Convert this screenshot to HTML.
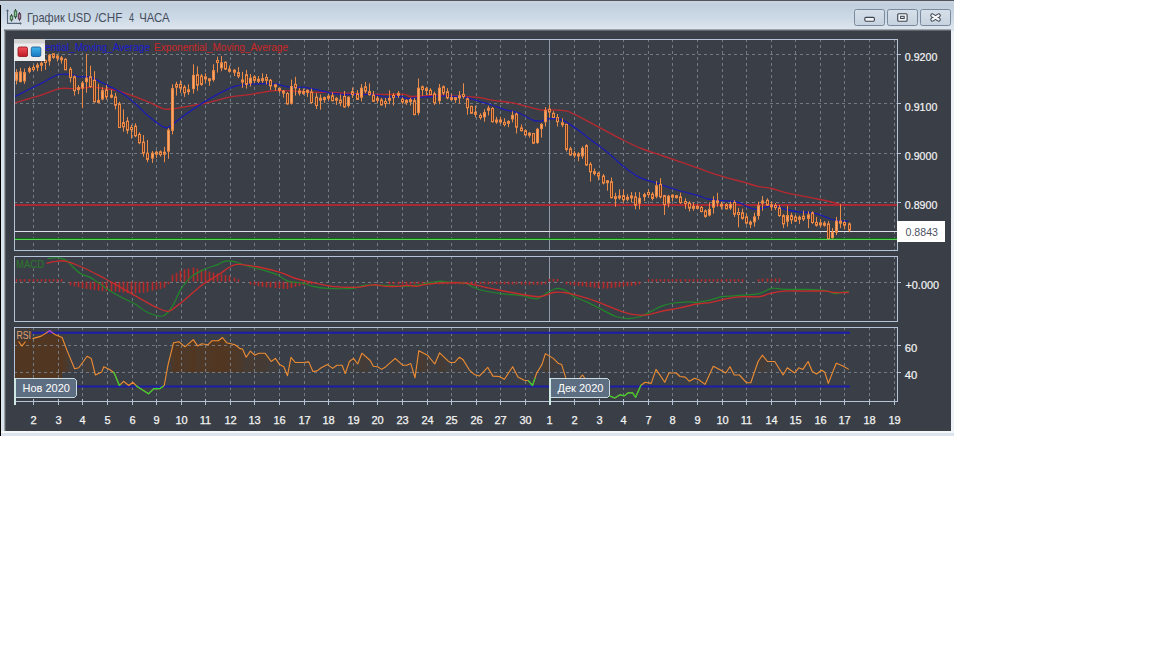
<!DOCTYPE html>
<html><head><meta charset="utf-8"><title>chart</title>
<style>html,body{margin:0;padding:0;background:#fff;width:1152px;height:648px;overflow:hidden}svg{display:block;font-family:"Liberation Sans",sans-serif}</style>
</head><body><svg width="1152" height="648" viewBox="0 0 1152 648">
<defs><linearGradient id="tb" x1="0" y1="0" x2="0" y2="1"><stop offset="0" stop-color="#cad4de"/><stop offset="0.12" stop-color="#c1cfdd"/><stop offset="0.55" stop-color="#cbd8e5"/><stop offset="1" stop-color="#dee6ee"/></linearGradient><linearGradient id="btn" x1="0" y1="0" x2="0" y2="1"><stop offset="0" stop-color="#d6e0ea"/><stop offset="1" stop-color="#c6d2df"/></linearGradient><linearGradient id="rsif" gradientUnits="userSpaceOnUse" x1="0" y1="336" x2="0" y2="376"><stop offset="0" stop-color="#5a3212" stop-opacity="0.9"/><stop offset="0.75" stop-color="#5a3212" stop-opacity="0.5"/><stop offset="1" stop-color="#5a3212" stop-opacity="0"/></linearGradient><clipPath id="cmain"><rect x="15" y="40" width="882" height="210"/></clipPath><clipPath id="cmacd"><rect x="15" y="257" width="882" height="64"/></clipPath><clipPath id="crsi"><rect x="15" y="328" width="882" height="73"/></clipPath></defs>
<rect x="0" y="0" width="954" height="436" fill="#dbe3ec"/>
<rect x="0" y="1" width="954" height="28.5" fill="url(#tb)"/>
<rect x="0" y="0" width="954" height="1" fill="#52575e"/>
<rect x="0" y="5" width="1" height="431" fill="#000"/>
<rect x="4" y="29.5" width="947" height="402" fill="#62676e"/>
<rect x="5" y="31" width="946" height="400" fill="#3a3f47"/>
<rect x="4" y="31" width="1" height="400" fill="#9ca1a6"/><rect x="5" y="31" width="1" height="400" fill="#5a5f65"/>
<rect x="1" y="431" width="953" height="2" fill="#f4f7fa"/>
<rect x="951" y="31" width="3" height="400" fill="#eef2f6"/>
<g fill="none" stroke="#566577" stroke-width="1.1"><path d="M7.5,10.5 V23.4 H20.5"/></g>
<path d="M7.5,9.2 L5.9,11.2 H9.1 Z M21.8,23.4 L19.9,21.8 V25 Z" fill="#566577"/>
<g stroke="#34443a" stroke-width="1"><line x1="11.5" y1="14" x2="11.5" y2="21.6"/><line x1="15.5" y1="9" x2="15.5" y2="18.8"/></g>
<line x1="19.5" y1="12" x2="19.5" y2="20.9" stroke="#443a46" stroke-width="1"/>
<rect x="10.3" y="15.9" width="2.4" height="4" fill="#9cc49c" stroke="#2e5a38" stroke-width="0.9"/>
<rect x="14.3" y="10.9" width="2.4" height="5.9" fill="#8cc08c" stroke="#2e5a38" stroke-width="0.9"/>
<rect x="18.3" y="13.8" width="2.4" height="5.2" fill="#b08098" stroke="#4a3048" stroke-width="0.9"/>
<text x="26.9" y="21.6" font-family="Liberation Sans" font-size="12.4" fill="#454d5c" textLength="64.3" lengthAdjust="spacingAndGlyphs">График USD</text>
<text x="95.1" y="21.6" font-family="Liberation Sans" font-size="12.4" fill="#454d5c" textLength="27.3" lengthAdjust="spacingAndGlyphs">/CHF</text>
<text x="129.1" y="21.6" font-family="Liberation Sans" font-size="12.4" fill="#454d5c" textLength="5.0" lengthAdjust="spacingAndGlyphs">4</text>
<text x="139.2" y="21.6" font-family="Liberation Sans" font-size="12.4" fill="#454d5c" textLength="30.5" lengthAdjust="spacingAndGlyphs">ЧАСА</text>
<rect x="854.5" y="9.5" width="30" height="16" rx="2" ry="2" fill="url(#btn)" stroke="#7a8a9c" stroke-width="1"/>
<rect x="887.5" y="9.5" width="30" height="16" rx="2" ry="2" fill="url(#btn)" stroke="#7a8a9c" stroke-width="1"/>
<rect x="920.5" y="9.5" width="30" height="16" rx="2" ry="2" fill="url(#btn)" stroke="#7a8a9c" stroke-width="1"/>
<rect x="864.8" y="17.4" width="9.6" height="3.9" rx="1.2" fill="#f0f3f6" stroke="#3c4450" stroke-width="1.1"/>
<rect x="897.7" y="13.7" width="9.4" height="7.6" rx="1" fill="#f0f3f6" stroke="#3c4450" stroke-width="1.1"/>
<rect x="900.6" y="16.3" width="3.6" height="2.2" fill="#dfe4ea" stroke="#3c4450" stroke-width="1"/>
<path d="M932.4,15.5 L938.7,19.5 M938.7,15.5 L932.4,19.5" stroke="#3c4450" stroke-width="4.2" stroke-linecap="round"/>
<path d="M932.4,15.5 L938.7,19.5 M938.7,15.5 L932.4,19.5" stroke="#f4f6f8" stroke-width="2.2" stroke-linecap="round"/>
<linearGradient id="rsih" gradientUnits="userSpaceOnUse" x1="32.5" y1="0" x2="848.8" y2="0"><stop offset="0.0000" stop-color="#5a3414" stop-opacity="0.72"/><stop offset="0.0037" stop-color="#5a3414" stop-opacity="0.72"/><stop offset="0.0074" stop-color="#5a3414" stop-opacity="0.72"/><stop offset="0.0110" stop-color="#5a3414" stop-opacity="0.72"/><stop offset="0.0147" stop-color="#5a3414" stop-opacity="0.72"/><stop offset="0.0184" stop-color="#5a3414" stop-opacity="0.72"/><stop offset="0.0221" stop-color="#5a3414" stop-opacity="0.72"/><stop offset="0.0257" stop-color="#5a3414" stop-opacity="0.72"/><stop offset="0.0294" stop-color="#5a3414" stop-opacity="0.72"/><stop offset="0.0331" stop-color="#5a3414" stop-opacity="0.72"/><stop offset="0.0368" stop-color="#5a3414" stop-opacity="0.72"/><stop offset="0.0404" stop-color="#5a3414" stop-opacity="0.59"/><stop offset="0.0441" stop-color="#5a3414" stop-opacity="0.36"/><stop offset="0.0478" stop-color="#5a3414" stop-opacity="0.14"/><stop offset="0.0515" stop-color="#5a3414" stop-opacity="0.00"/><stop offset="0.0551" stop-color="#5a3414" stop-opacity="0.00"/><stop offset="0.0588" stop-color="#5a3414" stop-opacity="0.02"/><stop offset="0.0625" stop-color="#5a3414" stop-opacity="0.14"/><stop offset="0.0662" stop-color="#5a3414" stop-opacity="0.27"/><stop offset="0.0698" stop-color="#5a3414" stop-opacity="0.26"/><stop offset="0.0735" stop-color="#5a3414" stop-opacity="0.08"/><stop offset="0.0772" stop-color="#5a3414" stop-opacity="0.00"/><stop offset="0.0809" stop-color="#5a3414" stop-opacity="0.00"/><stop offset="0.0845" stop-color="#5a3414" stop-opacity="0.00"/><stop offset="0.0882" stop-color="#5a3414" stop-opacity="0.00"/><stop offset="0.0919" stop-color="#5a3414" stop-opacity="0.00"/><stop offset="0.0956" stop-color="#5a3414" stop-opacity="0.00"/><stop offset="0.0992" stop-color="#5a3414" stop-opacity="0.00"/><stop offset="0.1029" stop-color="#5a3414" stop-opacity="0.00"/><stop offset="0.1066" stop-color="#5a3414" stop-opacity="0.00"/><stop offset="0.1103" stop-color="#5a3414" stop-opacity="0.00"/><stop offset="0.1139" stop-color="#5a3414" stop-opacity="0.00"/><stop offset="0.1176" stop-color="#5a3414" stop-opacity="0.00"/><stop offset="0.1213" stop-color="#5a3414" stop-opacity="0.00"/><stop offset="0.1250" stop-color="#5a3414" stop-opacity="0.00"/><stop offset="0.1286" stop-color="#5a3414" stop-opacity="0.00"/><stop offset="0.1323" stop-color="#5a3414" stop-opacity="0.00"/><stop offset="0.1360" stop-color="#5a3414" stop-opacity="0.00"/><stop offset="0.1397" stop-color="#5a3414" stop-opacity="0.00"/><stop offset="0.1433" stop-color="#5a3414" stop-opacity="0.00"/><stop offset="0.1470" stop-color="#5a3414" stop-opacity="0.00"/><stop offset="0.1507" stop-color="#5a3414" stop-opacity="0.00"/><stop offset="0.1544" stop-color="#5a3414" stop-opacity="0.00"/><stop offset="0.1580" stop-color="#5a3414" stop-opacity="0.00"/><stop offset="0.1617" stop-color="#5a3414" stop-opacity="0.00"/><stop offset="0.1654" stop-color="#5a3414" stop-opacity="0.00"/><stop offset="0.1691" stop-color="#5a3414" stop-opacity="0.33"/><stop offset="0.1727" stop-color="#5a3414" stop-opacity="0.69"/><stop offset="0.1764" stop-color="#5a3414" stop-opacity="0.72"/><stop offset="0.1801" stop-color="#5a3414" stop-opacity="0.71"/><stop offset="0.1838" stop-color="#5a3414" stop-opacity="0.64"/><stop offset="0.1874" stop-color="#5a3414" stop-opacity="0.59"/><stop offset="0.1911" stop-color="#5a3414" stop-opacity="0.66"/><stop offset="0.1948" stop-color="#5a3414" stop-opacity="0.72"/><stop offset="0.1985" stop-color="#5a3414" stop-opacity="0.72"/><stop offset="0.2021" stop-color="#5a3414" stop-opacity="0.60"/><stop offset="0.2058" stop-color="#5a3414" stop-opacity="0.65"/><stop offset="0.2095" stop-color="#5a3414" stop-opacity="0.66"/><stop offset="0.2132" stop-color="#5a3414" stop-opacity="0.64"/><stop offset="0.2168" stop-color="#5a3414" stop-opacity="0.68"/><stop offset="0.2205" stop-color="#5a3414" stop-opacity="0.72"/><stop offset="0.2242" stop-color="#5a3414" stop-opacity="0.72"/><stop offset="0.2279" stop-color="#5a3414" stop-opacity="0.72"/><stop offset="0.2315" stop-color="#5a3414" stop-opacity="0.72"/><stop offset="0.2352" stop-color="#5a3414" stop-opacity="0.72"/><stop offset="0.2389" stop-color="#5a3414" stop-opacity="0.69"/><stop offset="0.2426" stop-color="#5a3414" stop-opacity="0.67"/><stop offset="0.2462" stop-color="#5a3414" stop-opacity="0.65"/><stop offset="0.2499" stop-color="#5a3414" stop-opacity="0.60"/><stop offset="0.2536" stop-color="#5a3414" stop-opacity="0.53"/><stop offset="0.2573" stop-color="#5a3414" stop-opacity="0.51"/><stop offset="0.2609" stop-color="#5a3414" stop-opacity="0.31"/><stop offset="0.2646" stop-color="#5a3414" stop-opacity="0.36"/><stop offset="0.2683" stop-color="#5a3414" stop-opacity="0.42"/><stop offset="0.2720" stop-color="#5a3414" stop-opacity="0.33"/><stop offset="0.2757" stop-color="#5a3414" stop-opacity="0.37"/><stop offset="0.2793" stop-color="#5a3414" stop-opacity="0.38"/><stop offset="0.2830" stop-color="#5a3414" stop-opacity="0.38"/><stop offset="0.2867" stop-color="#5a3414" stop-opacity="0.32"/><stop offset="0.2904" stop-color="#5a3414" stop-opacity="0.20"/><stop offset="0.2940" stop-color="#5a3414" stop-opacity="0.16"/><stop offset="0.2977" stop-color="#5a3414" stop-opacity="0.22"/><stop offset="0.3014" stop-color="#5a3414" stop-opacity="0.09"/><stop offset="0.3051" stop-color="#5a3414" stop-opacity="0.01"/><stop offset="0.3087" stop-color="#5a3414" stop-opacity="0.00"/><stop offset="0.3124" stop-color="#5a3414" stop-opacity="0.00"/><stop offset="0.3161" stop-color="#5a3414" stop-opacity="0.18"/><stop offset="0.3198" stop-color="#5a3414" stop-opacity="0.17"/><stop offset="0.3234" stop-color="#5a3414" stop-opacity="0.10"/><stop offset="0.3271" stop-color="#5a3414" stop-opacity="0.10"/><stop offset="0.3308" stop-color="#5a3414" stop-opacity="0.10"/><stop offset="0.3345" stop-color="#5a3414" stop-opacity="0.11"/><stop offset="0.3381" stop-color="#5a3414" stop-opacity="0.12"/><stop offset="0.3418" stop-color="#5a3414" stop-opacity="0.00"/><stop offset="0.3455" stop-color="#5a3414" stop-opacity="0.00"/><stop offset="0.3492" stop-color="#5a3414" stop-opacity="0.00"/><stop offset="0.3528" stop-color="#5a3414" stop-opacity="0.00"/><stop offset="0.3565" stop-color="#5a3414" stop-opacity="0.00"/><stop offset="0.3602" stop-color="#5a3414" stop-opacity="0.03"/><stop offset="0.3639" stop-color="#5a3414" stop-opacity="0.00"/><stop offset="0.3675" stop-color="#5a3414" stop-opacity="0.00"/><stop offset="0.3712" stop-color="#5a3414" stop-opacity="0.00"/><stop offset="0.3749" stop-color="#5a3414" stop-opacity="0.02"/><stop offset="0.3786" stop-color="#5a3414" stop-opacity="0.02"/><stop offset="0.3822" stop-color="#5a3414" stop-opacity="0.00"/><stop offset="0.3859" stop-color="#5a3414" stop-opacity="0.00"/><stop offset="0.3896" stop-color="#5a3414" stop-opacity="0.16"/><stop offset="0.3933" stop-color="#5a3414" stop-opacity="0.23"/><stop offset="0.3969" stop-color="#5a3414" stop-opacity="0.11"/><stop offset="0.4006" stop-color="#5a3414" stop-opacity="0.20"/><stop offset="0.4043" stop-color="#5a3414" stop-opacity="0.37"/><stop offset="0.4080" stop-color="#5a3414" stop-opacity="0.29"/><stop offset="0.4116" stop-color="#5a3414" stop-opacity="0.21"/><stop offset="0.4153" stop-color="#5a3414" stop-opacity="0.09"/><stop offset="0.4190" stop-color="#5a3414" stop-opacity="0.00"/><stop offset="0.4227" stop-color="#5a3414" stop-opacity="0.00"/><stop offset="0.4263" stop-color="#5a3414" stop-opacity="0.00"/><stop offset="0.4300" stop-color="#5a3414" stop-opacity="0.00"/><stop offset="0.4337" stop-color="#5a3414" stop-opacity="0.00"/><stop offset="0.4374" stop-color="#5a3414" stop-opacity="0.08"/><stop offset="0.4410" stop-color="#5a3414" stop-opacity="0.16"/><stop offset="0.4447" stop-color="#5a3414" stop-opacity="0.22"/><stop offset="0.4484" stop-color="#5a3414" stop-opacity="0.14"/><stop offset="0.4521" stop-color="#5a3414" stop-opacity="0.05"/><stop offset="0.4557" stop-color="#5a3414" stop-opacity="0.02"/><stop offset="0.4594" stop-color="#5a3414" stop-opacity="0.03"/><stop offset="0.4631" stop-color="#5a3414" stop-opacity="0.07"/><stop offset="0.4668" stop-color="#5a3414" stop-opacity="0.00"/><stop offset="0.4704" stop-color="#5a3414" stop-opacity="0.00"/><stop offset="0.4741" stop-color="#5a3414" stop-opacity="0.45"/><stop offset="0.4778" stop-color="#5a3414" stop-opacity="0.40"/><stop offset="0.4815" stop-color="#5a3414" stop-opacity="0.35"/><stop offset="0.4851" stop-color="#5a3414" stop-opacity="0.29"/><stop offset="0.4888" stop-color="#5a3414" stop-opacity="0.18"/><stop offset="0.4925" stop-color="#5a3414" stop-opacity="0.07"/><stop offset="0.4962" stop-color="#5a3414" stop-opacity="0.25"/><stop offset="0.4998" stop-color="#5a3414" stop-opacity="0.37"/><stop offset="0.5035" stop-color="#5a3414" stop-opacity="0.29"/><stop offset="0.5072" stop-color="#5a3414" stop-opacity="0.20"/><stop offset="0.5109" stop-color="#5a3414" stop-opacity="0.12"/><stop offset="0.5145" stop-color="#5a3414" stop-opacity="0.10"/><stop offset="0.5182" stop-color="#5a3414" stop-opacity="0.13"/><stop offset="0.5219" stop-color="#5a3414" stop-opacity="0.24"/><stop offset="0.5256" stop-color="#5a3414" stop-opacity="0.22"/><stop offset="0.5292" stop-color="#5a3414" stop-opacity="0.12"/><stop offset="0.5329" stop-color="#5a3414" stop-opacity="0.00"/><stop offset="0.5366" stop-color="#5a3414" stop-opacity="0.00"/><stop offset="0.5403" stop-color="#5a3414" stop-opacity="0.00"/><stop offset="0.5440" stop-color="#5a3414" stop-opacity="0.00"/><stop offset="0.5476" stop-color="#5a3414" stop-opacity="0.00"/><stop offset="0.5513" stop-color="#5a3414" stop-opacity="0.00"/><stop offset="0.5550" stop-color="#5a3414" stop-opacity="0.00"/><stop offset="0.5587" stop-color="#5a3414" stop-opacity="0.00"/><stop offset="0.5623" stop-color="#5a3414" stop-opacity="0.00"/><stop offset="0.5660" stop-color="#5a3414" stop-opacity="0.00"/><stop offset="0.5697" stop-color="#5a3414" stop-opacity="0.00"/><stop offset="0.5734" stop-color="#5a3414" stop-opacity="0.00"/><stop offset="0.5770" stop-color="#5a3414" stop-opacity="0.00"/><stop offset="0.5807" stop-color="#5a3414" stop-opacity="0.00"/><stop offset="0.5844" stop-color="#5a3414" stop-opacity="0.00"/><stop offset="0.5881" stop-color="#5a3414" stop-opacity="0.00"/><stop offset="0.5917" stop-color="#5a3414" stop-opacity="0.00"/><stop offset="0.5954" stop-color="#5a3414" stop-opacity="0.00"/><stop offset="0.5991" stop-color="#5a3414" stop-opacity="0.00"/><stop offset="0.6028" stop-color="#5a3414" stop-opacity="0.00"/><stop offset="0.6064" stop-color="#5a3414" stop-opacity="0.00"/><stop offset="0.6101" stop-color="#5a3414" stop-opacity="0.00"/><stop offset="0.6138" stop-color="#5a3414" stop-opacity="0.00"/><stop offset="0.6175" stop-color="#5a3414" stop-opacity="0.00"/><stop offset="0.6211" stop-color="#5a3414" stop-opacity="0.00"/><stop offset="0.6248" stop-color="#5a3414" stop-opacity="0.10"/><stop offset="0.6285" stop-color="#5a3414" stop-opacity="0.37"/><stop offset="0.6322" stop-color="#5a3414" stop-opacity="0.32"/><stop offset="0.6358" stop-color="#5a3414" stop-opacity="0.26"/><stop offset="0.6395" stop-color="#5a3414" stop-opacity="0.19"/><stop offset="0.6432" stop-color="#5a3414" stop-opacity="0.10"/><stop offset="0.6469" stop-color="#5a3414" stop-opacity="0.05"/><stop offset="0.6505" stop-color="#5a3414" stop-opacity="0.00"/><stop offset="0.6542" stop-color="#5a3414" stop-opacity="0.00"/><stop offset="0.6579" stop-color="#5a3414" stop-opacity="0.00"/><stop offset="0.6616" stop-color="#5a3414" stop-opacity="0.00"/><stop offset="0.6652" stop-color="#5a3414" stop-opacity="0.00"/><stop offset="0.6689" stop-color="#5a3414" stop-opacity="0.00"/><stop offset="0.6726" stop-color="#5a3414" stop-opacity="0.00"/><stop offset="0.6763" stop-color="#5a3414" stop-opacity="0.00"/><stop offset="0.6799" stop-color="#5a3414" stop-opacity="0.00"/><stop offset="0.6836" stop-color="#5a3414" stop-opacity="0.00"/><stop offset="0.6873" stop-color="#5a3414" stop-opacity="0.00"/><stop offset="0.6910" stop-color="#5a3414" stop-opacity="0.00"/><stop offset="0.6946" stop-color="#5a3414" stop-opacity="0.00"/><stop offset="0.6983" stop-color="#5a3414" stop-opacity="0.00"/><stop offset="0.7020" stop-color="#5a3414" stop-opacity="0.00"/><stop offset="0.7057" stop-color="#5a3414" stop-opacity="0.00"/><stop offset="0.7093" stop-color="#5a3414" stop-opacity="0.00"/><stop offset="0.7130" stop-color="#5a3414" stop-opacity="0.00"/><stop offset="0.7167" stop-color="#5a3414" stop-opacity="0.00"/><stop offset="0.7204" stop-color="#5a3414" stop-opacity="0.00"/><stop offset="0.7240" stop-color="#5a3414" stop-opacity="0.00"/><stop offset="0.7277" stop-color="#5a3414" stop-opacity="0.00"/><stop offset="0.7314" stop-color="#5a3414" stop-opacity="0.00"/><stop offset="0.7351" stop-color="#5a3414" stop-opacity="0.00"/><stop offset="0.7387" stop-color="#5a3414" stop-opacity="0.00"/><stop offset="0.7424" stop-color="#5a3414" stop-opacity="0.00"/><stop offset="0.7461" stop-color="#5a3414" stop-opacity="0.00"/><stop offset="0.7498" stop-color="#5a3414" stop-opacity="0.00"/><stop offset="0.7534" stop-color="#5a3414" stop-opacity="0.00"/><stop offset="0.7571" stop-color="#5a3414" stop-opacity="0.00"/><stop offset="0.7608" stop-color="#5a3414" stop-opacity="0.00"/><stop offset="0.7645" stop-color="#5a3414" stop-opacity="0.00"/><stop offset="0.7681" stop-color="#5a3414" stop-opacity="0.00"/><stop offset="0.7718" stop-color="#5a3414" stop-opacity="0.00"/><stop offset="0.7755" stop-color="#5a3414" stop-opacity="0.00"/><stop offset="0.7792" stop-color="#5a3414" stop-opacity="0.00"/><stop offset="0.7828" stop-color="#5a3414" stop-opacity="0.00"/><stop offset="0.7865" stop-color="#5a3414" stop-opacity="0.00"/><stop offset="0.7902" stop-color="#5a3414" stop-opacity="0.00"/><stop offset="0.7939" stop-color="#5a3414" stop-opacity="0.00"/><stop offset="0.7975" stop-color="#5a3414" stop-opacity="0.00"/><stop offset="0.8012" stop-color="#5a3414" stop-opacity="0.00"/><stop offset="0.8049" stop-color="#5a3414" stop-opacity="0.00"/><stop offset="0.8086" stop-color="#5a3414" stop-opacity="0.00"/><stop offset="0.8123" stop-color="#5a3414" stop-opacity="0.00"/><stop offset="0.8159" stop-color="#5a3414" stop-opacity="0.00"/><stop offset="0.8196" stop-color="#5a3414" stop-opacity="0.00"/><stop offset="0.8233" stop-color="#5a3414" stop-opacity="0.00"/><stop offset="0.8270" stop-color="#5a3414" stop-opacity="0.00"/><stop offset="0.8306" stop-color="#5a3414" stop-opacity="0.00"/><stop offset="0.8343" stop-color="#5a3414" stop-opacity="0.00"/><stop offset="0.8380" stop-color="#5a3414" stop-opacity="0.00"/><stop offset="0.8417" stop-color="#5a3414" stop-opacity="0.00"/><stop offset="0.8453" stop-color="#5a3414" stop-opacity="0.00"/><stop offset="0.8490" stop-color="#5a3414" stop-opacity="0.00"/><stop offset="0.8527" stop-color="#5a3414" stop-opacity="0.00"/><stop offset="0.8564" stop-color="#5a3414" stop-opacity="0.00"/><stop offset="0.8600" stop-color="#5a3414" stop-opacity="0.00"/><stop offset="0.8637" stop-color="#5a3414" stop-opacity="0.00"/><stop offset="0.8674" stop-color="#5a3414" stop-opacity="0.00"/><stop offset="0.8711" stop-color="#5a3414" stop-opacity="0.00"/><stop offset="0.8747" stop-color="#5a3414" stop-opacity="0.00"/><stop offset="0.8784" stop-color="#5a3414" stop-opacity="0.00"/><stop offset="0.8821" stop-color="#5a3414" stop-opacity="0.00"/><stop offset="0.8858" stop-color="#5a3414" stop-opacity="0.00"/><stop offset="0.8894" stop-color="#5a3414" stop-opacity="0.15"/><stop offset="0.8931" stop-color="#5a3414" stop-opacity="0.29"/><stop offset="0.8968" stop-color="#5a3414" stop-opacity="0.24"/><stop offset="0.9005" stop-color="#5a3414" stop-opacity="0.14"/><stop offset="0.9041" stop-color="#5a3414" stop-opacity="0.14"/><stop offset="0.9078" stop-color="#5a3414" stop-opacity="0.14"/><stop offset="0.9115" stop-color="#5a3414" stop-opacity="0.05"/><stop offset="0.9152" stop-color="#5a3414" stop-opacity="0.00"/><stop offset="0.9188" stop-color="#5a3414" stop-opacity="0.00"/><stop offset="0.9225" stop-color="#5a3414" stop-opacity="0.00"/><stop offset="0.9262" stop-color="#5a3414" stop-opacity="0.00"/><stop offset="0.9299" stop-color="#5a3414" stop-opacity="0.00"/><stop offset="0.9335" stop-color="#5a3414" stop-opacity="0.00"/><stop offset="0.9372" stop-color="#5a3414" stop-opacity="0.00"/><stop offset="0.9409" stop-color="#5a3414" stop-opacity="0.00"/><stop offset="0.9446" stop-color="#5a3414" stop-opacity="0.00"/><stop offset="0.9482" stop-color="#5a3414" stop-opacity="0.06"/><stop offset="0.9519" stop-color="#5a3414" stop-opacity="0.04"/><stop offset="0.9556" stop-color="#5a3414" stop-opacity="0.00"/><stop offset="0.9593" stop-color="#5a3414" stop-opacity="0.00"/><stop offset="0.9629" stop-color="#5a3414" stop-opacity="0.00"/><stop offset="0.9666" stop-color="#5a3414" stop-opacity="0.00"/><stop offset="0.9703" stop-color="#5a3414" stop-opacity="0.00"/><stop offset="0.9740" stop-color="#5a3414" stop-opacity="0.00"/><stop offset="0.9776" stop-color="#5a3414" stop-opacity="0.00"/><stop offset="0.9813" stop-color="#5a3414" stop-opacity="0.00"/><stop offset="0.9850" stop-color="#5a3414" stop-opacity="0.08"/><stop offset="0.9887" stop-color="#5a3414" stop-opacity="0.05"/><stop offset="0.9923" stop-color="#5a3414" stop-opacity="0.01"/><stop offset="0.9960" stop-color="#5a3414" stop-opacity="0.00"/><stop offset="0.9997" stop-color="#5a3414" stop-opacity="0.00"/></linearGradient>
<clipPath id="crsi2"><rect x="15" y="328" width="882" height="44.5"/><rect x="15" y="328" width="47" height="50"/></clipPath>
<path d="M32.5,338.6 L41.2,336.1 L49.6,330.7 L54.8,334.4 L62.1,337.5 L67.3,351.1 L74.6,368.8 L78.8,367.8 L87.1,356.3 L91.2,358.4 L95.4,375.0 L101.7,371.9 L103.8,366.7 L110.0,369.8 L114.2,373.0 L119.4,385.5 L123.5,381.3 L128.8,385.5 L132.9,382.3 L137.1,386.5 L145.4,391.7 L148.5,393.8 L153.8,388.6 L160.0,388.6 L164.2,385.5 L168.3,363.6 L173.5,342.8 L178.8,341.7 L185.0,346.9 L193.3,339.6 L197.5,345.9 L201.7,343.8 L207.9,344.8 L212.1,340.7 L218.3,340.7 L222.5,337.5 L226.7,342.8 L235.0,344.8 L240.0,348.6 L242.5,349.0 L246.2,357.3 L250.4,351.1 L254.6,355.2 L258.8,353.2 L265.0,353.2 L271.2,361.5 L275.4,358.4 L279.6,364.6 L283.8,366.7 L287.5,375.7 L291.0,357.3 L295.2,362.5 L302.5,362.5 L308.8,361.9 L312.9,371.5 L317.1,370.9 L321.2,367.8 L327.5,364.6 L332.7,368.4 L336.9,365.2 L342.1,365.2 L345.2,373.6 L349.4,361.5 L353.5,358.4 L357.7,364.0 L361.9,353.2 L370.2,360.5 L373.3,366.3 L377.5,366.7 L381.7,369.4 L385.8,366.7 L395.2,358.4 L402.5,365.2 L406.7,365.2 L410.8,363.6 L415.0,377.8 L418.8,350.7 L427.5,355.2 L434.8,364.0 L439.6,352.8 L448.3,361.1 L450.4,362.5 L454.6,362.5 L459.2,357.3 L462.9,359.4 L469.2,369.8 L474.2,374.4 L479.4,376.1 L487.7,367.3 L492.9,376.1 L499.2,376.5 L504.4,379.2 L512.7,366.7 L517.9,377.1 L524.2,380.2 L528.3,380.7 L532.5,385.5 L536.7,373.0 L541.9,364.6 L545.4,353.6 L553.3,358.4 L558.5,363.6 L561.7,364.6 L565.8,378.2 L574.2,384.4 L582.5,375.0 L590.8,386.5 L603.3,390.7 L609.6,395.9 L614.8,398.0 L620.0,394.8 L624.2,395.9 L628.3,392.8 L632.5,392.8 L635.6,397.3 L640.8,385.5 L645.0,382.3 L651.2,383.4 L656.0,369.4 L664.8,382.3 L669.0,373.0 L676.2,373.0 L680.0,376.5 L685.2,377.1 L689.4,381.3 L694.6,378.2 L698.8,379.8 L705.0,384.4 L713.3,366.3 L719.6,369.4 L725.8,373.0 L730.0,366.7 L734.2,375.0 L739.4,375.0 L746.7,382.8 L750.8,382.8 L758.1,361.5 L762.3,355.2 L767.5,361.5 L774.8,361.5 L783.1,375.0 L787.3,367.8 L794.6,373.0 L798.8,367.8 L802.9,369.4 L808.1,361.5 L812.3,371.5 L816.5,374.0 L821.7,370.2 L824.8,372.3 L828.3,383.4 L836.2,363.2 L842.5,365.7 L848.8,369.4 L848.8,380.0 L32.5,380.0 Z" fill="url(#rsih)" clip-path="url(#crsi2)"/>
<rect x="15" y="339.5" width="17.5" height="38.5" fill="#5a3414" fill-opacity="0.72"/>
<line x1="33.5" y1="39.0" x2="33.5" y2="250.5" stroke="#737a82" stroke-width="1" stroke-dasharray="3,3"/>
<line x1="33.5" y1="256.0" x2="33.5" y2="321.5" stroke="#737a82" stroke-width="1" stroke-dasharray="3,3"/>
<line x1="33.5" y1="327.0" x2="33.5" y2="401.5" stroke="#737a82" stroke-width="1" stroke-dasharray="3,3"/>
<line x1="58.5" y1="39.0" x2="58.5" y2="250.5" stroke="#737a82" stroke-width="1" stroke-dasharray="3,3"/>
<line x1="58.5" y1="256.0" x2="58.5" y2="321.5" stroke="#737a82" stroke-width="1" stroke-dasharray="3,3"/>
<line x1="58.5" y1="327.0" x2="58.5" y2="401.5" stroke="#737a82" stroke-width="1" stroke-dasharray="3,3"/>
<line x1="82.5" y1="39.0" x2="82.5" y2="250.5" stroke="#737a82" stroke-width="1" stroke-dasharray="3,3"/>
<line x1="82.5" y1="256.0" x2="82.5" y2="321.5" stroke="#737a82" stroke-width="1" stroke-dasharray="3,3"/>
<line x1="82.5" y1="327.0" x2="82.5" y2="401.5" stroke="#737a82" stroke-width="1" stroke-dasharray="3,3"/>
<line x1="107.5" y1="39.0" x2="107.5" y2="250.5" stroke="#737a82" stroke-width="1" stroke-dasharray="3,3"/>
<line x1="107.5" y1="256.0" x2="107.5" y2="321.5" stroke="#737a82" stroke-width="1" stroke-dasharray="3,3"/>
<line x1="107.5" y1="327.0" x2="107.5" y2="401.5" stroke="#737a82" stroke-width="1" stroke-dasharray="3,3"/>
<line x1="132.5" y1="39.0" x2="132.5" y2="250.5" stroke="#737a82" stroke-width="1" stroke-dasharray="3,3"/>
<line x1="132.5" y1="256.0" x2="132.5" y2="321.5" stroke="#737a82" stroke-width="1" stroke-dasharray="3,3"/>
<line x1="132.5" y1="327.0" x2="132.5" y2="401.5" stroke="#737a82" stroke-width="1" stroke-dasharray="3,3"/>
<line x1="156.5" y1="39.0" x2="156.5" y2="250.5" stroke="#737a82" stroke-width="1" stroke-dasharray="3,3"/>
<line x1="156.5" y1="256.0" x2="156.5" y2="321.5" stroke="#737a82" stroke-width="1" stroke-dasharray="3,3"/>
<line x1="156.5" y1="327.0" x2="156.5" y2="401.5" stroke="#737a82" stroke-width="1" stroke-dasharray="3,3"/>
<line x1="181.5" y1="39.0" x2="181.5" y2="250.5" stroke="#737a82" stroke-width="1" stroke-dasharray="3,3"/>
<line x1="181.5" y1="256.0" x2="181.5" y2="321.5" stroke="#737a82" stroke-width="1" stroke-dasharray="3,3"/>
<line x1="181.5" y1="327.0" x2="181.5" y2="401.5" stroke="#737a82" stroke-width="1" stroke-dasharray="3,3"/>
<line x1="205.5" y1="39.0" x2="205.5" y2="250.5" stroke="#737a82" stroke-width="1" stroke-dasharray="3,3"/>
<line x1="205.5" y1="256.0" x2="205.5" y2="321.5" stroke="#737a82" stroke-width="1" stroke-dasharray="3,3"/>
<line x1="205.5" y1="327.0" x2="205.5" y2="401.5" stroke="#737a82" stroke-width="1" stroke-dasharray="3,3"/>
<line x1="230.5" y1="39.0" x2="230.5" y2="250.5" stroke="#737a82" stroke-width="1" stroke-dasharray="3,3"/>
<line x1="230.5" y1="256.0" x2="230.5" y2="321.5" stroke="#737a82" stroke-width="1" stroke-dasharray="3,3"/>
<line x1="230.5" y1="327.0" x2="230.5" y2="401.5" stroke="#737a82" stroke-width="1" stroke-dasharray="3,3"/>
<line x1="254.5" y1="39.0" x2="254.5" y2="250.5" stroke="#737a82" stroke-width="1" stroke-dasharray="3,3"/>
<line x1="254.5" y1="256.0" x2="254.5" y2="321.5" stroke="#737a82" stroke-width="1" stroke-dasharray="3,3"/>
<line x1="254.5" y1="327.0" x2="254.5" y2="401.5" stroke="#737a82" stroke-width="1" stroke-dasharray="3,3"/>
<line x1="279.5" y1="39.0" x2="279.5" y2="250.5" stroke="#737a82" stroke-width="1" stroke-dasharray="3,3"/>
<line x1="279.5" y1="256.0" x2="279.5" y2="321.5" stroke="#737a82" stroke-width="1" stroke-dasharray="3,3"/>
<line x1="279.5" y1="327.0" x2="279.5" y2="401.5" stroke="#737a82" stroke-width="1" stroke-dasharray="3,3"/>
<line x1="304.5" y1="39.0" x2="304.5" y2="250.5" stroke="#737a82" stroke-width="1" stroke-dasharray="3,3"/>
<line x1="304.5" y1="256.0" x2="304.5" y2="321.5" stroke="#737a82" stroke-width="1" stroke-dasharray="3,3"/>
<line x1="304.5" y1="327.0" x2="304.5" y2="401.5" stroke="#737a82" stroke-width="1" stroke-dasharray="3,3"/>
<line x1="328.5" y1="39.0" x2="328.5" y2="250.5" stroke="#737a82" stroke-width="1" stroke-dasharray="3,3"/>
<line x1="328.5" y1="256.0" x2="328.5" y2="321.5" stroke="#737a82" stroke-width="1" stroke-dasharray="3,3"/>
<line x1="328.5" y1="327.0" x2="328.5" y2="401.5" stroke="#737a82" stroke-width="1" stroke-dasharray="3,3"/>
<line x1="353.5" y1="39.0" x2="353.5" y2="250.5" stroke="#737a82" stroke-width="1" stroke-dasharray="3,3"/>
<line x1="353.5" y1="256.0" x2="353.5" y2="321.5" stroke="#737a82" stroke-width="1" stroke-dasharray="3,3"/>
<line x1="353.5" y1="327.0" x2="353.5" y2="401.5" stroke="#737a82" stroke-width="1" stroke-dasharray="3,3"/>
<line x1="377.5" y1="39.0" x2="377.5" y2="250.5" stroke="#737a82" stroke-width="1" stroke-dasharray="3,3"/>
<line x1="377.5" y1="256.0" x2="377.5" y2="321.5" stroke="#737a82" stroke-width="1" stroke-dasharray="3,3"/>
<line x1="377.5" y1="327.0" x2="377.5" y2="401.5" stroke="#737a82" stroke-width="1" stroke-dasharray="3,3"/>
<line x1="402.5" y1="39.0" x2="402.5" y2="250.5" stroke="#737a82" stroke-width="1" stroke-dasharray="3,3"/>
<line x1="402.5" y1="256.0" x2="402.5" y2="321.5" stroke="#737a82" stroke-width="1" stroke-dasharray="3,3"/>
<line x1="402.5" y1="327.0" x2="402.5" y2="401.5" stroke="#737a82" stroke-width="1" stroke-dasharray="3,3"/>
<line x1="427.5" y1="39.0" x2="427.5" y2="250.5" stroke="#737a82" stroke-width="1" stroke-dasharray="3,3"/>
<line x1="427.5" y1="256.0" x2="427.5" y2="321.5" stroke="#737a82" stroke-width="1" stroke-dasharray="3,3"/>
<line x1="427.5" y1="327.0" x2="427.5" y2="401.5" stroke="#737a82" stroke-width="1" stroke-dasharray="3,3"/>
<line x1="451.5" y1="39.0" x2="451.5" y2="250.5" stroke="#737a82" stroke-width="1" stroke-dasharray="3,3"/>
<line x1="451.5" y1="256.0" x2="451.5" y2="321.5" stroke="#737a82" stroke-width="1" stroke-dasharray="3,3"/>
<line x1="451.5" y1="327.0" x2="451.5" y2="401.5" stroke="#737a82" stroke-width="1" stroke-dasharray="3,3"/>
<line x1="476.5" y1="39.0" x2="476.5" y2="250.5" stroke="#737a82" stroke-width="1" stroke-dasharray="3,3"/>
<line x1="476.5" y1="256.0" x2="476.5" y2="321.5" stroke="#737a82" stroke-width="1" stroke-dasharray="3,3"/>
<line x1="476.5" y1="327.0" x2="476.5" y2="401.5" stroke="#737a82" stroke-width="1" stroke-dasharray="3,3"/>
<line x1="500.5" y1="39.0" x2="500.5" y2="250.5" stroke="#737a82" stroke-width="1" stroke-dasharray="3,3"/>
<line x1="500.5" y1="256.0" x2="500.5" y2="321.5" stroke="#737a82" stroke-width="1" stroke-dasharray="3,3"/>
<line x1="500.5" y1="327.0" x2="500.5" y2="401.5" stroke="#737a82" stroke-width="1" stroke-dasharray="3,3"/>
<line x1="525.5" y1="39.0" x2="525.5" y2="250.5" stroke="#737a82" stroke-width="1" stroke-dasharray="3,3"/>
<line x1="525.5" y1="256.0" x2="525.5" y2="321.5" stroke="#737a82" stroke-width="1" stroke-dasharray="3,3"/>
<line x1="525.5" y1="327.0" x2="525.5" y2="401.5" stroke="#737a82" stroke-width="1" stroke-dasharray="3,3"/>
<line x1="549.5" y1="39.0" x2="549.5" y2="250.5" stroke="#737a82" stroke-width="1" stroke-dasharray="3,3"/>
<line x1="549.5" y1="256.0" x2="549.5" y2="321.5" stroke="#737a82" stroke-width="1" stroke-dasharray="3,3"/>
<line x1="549.5" y1="327.0" x2="549.5" y2="401.5" stroke="#737a82" stroke-width="1" stroke-dasharray="3,3"/>
<line x1="574.5" y1="39.0" x2="574.5" y2="250.5" stroke="#737a82" stroke-width="1" stroke-dasharray="3,3"/>
<line x1="574.5" y1="256.0" x2="574.5" y2="321.5" stroke="#737a82" stroke-width="1" stroke-dasharray="3,3"/>
<line x1="574.5" y1="327.0" x2="574.5" y2="401.5" stroke="#737a82" stroke-width="1" stroke-dasharray="3,3"/>
<line x1="599.5" y1="39.0" x2="599.5" y2="250.5" stroke="#737a82" stroke-width="1" stroke-dasharray="3,3"/>
<line x1="599.5" y1="256.0" x2="599.5" y2="321.5" stroke="#737a82" stroke-width="1" stroke-dasharray="3,3"/>
<line x1="599.5" y1="327.0" x2="599.5" y2="401.5" stroke="#737a82" stroke-width="1" stroke-dasharray="3,3"/>
<line x1="623.5" y1="39.0" x2="623.5" y2="250.5" stroke="#737a82" stroke-width="1" stroke-dasharray="3,3"/>
<line x1="623.5" y1="256.0" x2="623.5" y2="321.5" stroke="#737a82" stroke-width="1" stroke-dasharray="3,3"/>
<line x1="623.5" y1="327.0" x2="623.5" y2="401.5" stroke="#737a82" stroke-width="1" stroke-dasharray="3,3"/>
<line x1="648.5" y1="39.0" x2="648.5" y2="250.5" stroke="#737a82" stroke-width="1" stroke-dasharray="3,3"/>
<line x1="648.5" y1="256.0" x2="648.5" y2="321.5" stroke="#737a82" stroke-width="1" stroke-dasharray="3,3"/>
<line x1="648.5" y1="327.0" x2="648.5" y2="401.5" stroke="#737a82" stroke-width="1" stroke-dasharray="3,3"/>
<line x1="672.5" y1="39.0" x2="672.5" y2="250.5" stroke="#737a82" stroke-width="1" stroke-dasharray="3,3"/>
<line x1="672.5" y1="256.0" x2="672.5" y2="321.5" stroke="#737a82" stroke-width="1" stroke-dasharray="3,3"/>
<line x1="672.5" y1="327.0" x2="672.5" y2="401.5" stroke="#737a82" stroke-width="1" stroke-dasharray="3,3"/>
<line x1="697.5" y1="39.0" x2="697.5" y2="250.5" stroke="#737a82" stroke-width="1" stroke-dasharray="3,3"/>
<line x1="697.5" y1="256.0" x2="697.5" y2="321.5" stroke="#737a82" stroke-width="1" stroke-dasharray="3,3"/>
<line x1="697.5" y1="327.0" x2="697.5" y2="401.5" stroke="#737a82" stroke-width="1" stroke-dasharray="3,3"/>
<line x1="722.5" y1="39.0" x2="722.5" y2="250.5" stroke="#737a82" stroke-width="1" stroke-dasharray="3,3"/>
<line x1="722.5" y1="256.0" x2="722.5" y2="321.5" stroke="#737a82" stroke-width="1" stroke-dasharray="3,3"/>
<line x1="722.5" y1="327.0" x2="722.5" y2="401.5" stroke="#737a82" stroke-width="1" stroke-dasharray="3,3"/>
<line x1="746.5" y1="39.0" x2="746.5" y2="250.5" stroke="#737a82" stroke-width="1" stroke-dasharray="3,3"/>
<line x1="746.5" y1="256.0" x2="746.5" y2="321.5" stroke="#737a82" stroke-width="1" stroke-dasharray="3,3"/>
<line x1="746.5" y1="327.0" x2="746.5" y2="401.5" stroke="#737a82" stroke-width="1" stroke-dasharray="3,3"/>
<line x1="771.5" y1="39.0" x2="771.5" y2="250.5" stroke="#737a82" stroke-width="1" stroke-dasharray="3,3"/>
<line x1="771.5" y1="256.0" x2="771.5" y2="321.5" stroke="#737a82" stroke-width="1" stroke-dasharray="3,3"/>
<line x1="771.5" y1="327.0" x2="771.5" y2="401.5" stroke="#737a82" stroke-width="1" stroke-dasharray="3,3"/>
<line x1="795.5" y1="39.0" x2="795.5" y2="250.5" stroke="#737a82" stroke-width="1" stroke-dasharray="3,3"/>
<line x1="795.5" y1="256.0" x2="795.5" y2="321.5" stroke="#737a82" stroke-width="1" stroke-dasharray="3,3"/>
<line x1="795.5" y1="327.0" x2="795.5" y2="401.5" stroke="#737a82" stroke-width="1" stroke-dasharray="3,3"/>
<line x1="820.5" y1="39.0" x2="820.5" y2="250.5" stroke="#737a82" stroke-width="1" stroke-dasharray="3,3"/>
<line x1="820.5" y1="256.0" x2="820.5" y2="321.5" stroke="#737a82" stroke-width="1" stroke-dasharray="3,3"/>
<line x1="820.5" y1="327.0" x2="820.5" y2="401.5" stroke="#737a82" stroke-width="1" stroke-dasharray="3,3"/>
<line x1="844.5" y1="39.0" x2="844.5" y2="250.5" stroke="#737a82" stroke-width="1" stroke-dasharray="3,3"/>
<line x1="844.5" y1="256.0" x2="844.5" y2="321.5" stroke="#737a82" stroke-width="1" stroke-dasharray="3,3"/>
<line x1="844.5" y1="327.0" x2="844.5" y2="401.5" stroke="#737a82" stroke-width="1" stroke-dasharray="3,3"/>
<line x1="869.5" y1="39.0" x2="869.5" y2="250.5" stroke="#737a82" stroke-width="1" stroke-dasharray="3,3"/>
<line x1="869.5" y1="256.0" x2="869.5" y2="321.5" stroke="#737a82" stroke-width="1" stroke-dasharray="3,3"/>
<line x1="869.5" y1="327.0" x2="869.5" y2="401.5" stroke="#737a82" stroke-width="1" stroke-dasharray="3,3"/>
<line x1="894.5" y1="39.0" x2="894.5" y2="250.5" stroke="#737a82" stroke-width="1" stroke-dasharray="3,3"/>
<line x1="894.5" y1="256.0" x2="894.5" y2="321.5" stroke="#737a82" stroke-width="1" stroke-dasharray="3,3"/>
<line x1="894.5" y1="327.0" x2="894.5" y2="401.5" stroke="#737a82" stroke-width="1" stroke-dasharray="3,3"/>
<line x1="14" y1="54.5" x2="897" y2="54.5" stroke="#737a82" stroke-width="1" stroke-dasharray="3,3"/>
<line x1="14" y1="103.5" x2="897" y2="103.5" stroke="#737a82" stroke-width="1" stroke-dasharray="3,3"/>
<line x1="14" y1="153.5" x2="897" y2="153.5" stroke="#737a82" stroke-width="1" stroke-dasharray="3,3"/>
<line x1="14" y1="202.5" x2="897" y2="202.5" stroke="#737a82" stroke-width="1" stroke-dasharray="3,3"/>
<line x1="14" y1="282.5" x2="897" y2="282.5" stroke="#737a82" stroke-width="1" stroke-dasharray="3,3"/>
<line x1="14" y1="345.5" x2="897" y2="345.5" stroke="#737a82" stroke-width="1" stroke-dasharray="3,3"/>
<line x1="14" y1="372.5" x2="897" y2="372.5" stroke="#737a82" stroke-width="1" stroke-dasharray="3,3"/>
<line x1="14.5" y1="39.5" x2="14.5" y2="250.5" stroke="#8e98a8" stroke-width="1"/>
<line x1="14.5" y1="256.5" x2="14.5" y2="321.5" stroke="#8e98a8" stroke-width="1"/>
<line x1="14.5" y1="327.5" x2="14.5" y2="401.5" stroke="#8e98a8" stroke-width="1"/>
<line x1="549.5" y1="39.5" x2="549.5" y2="250.5" stroke="#8e98a8" stroke-width="1"/>
<line x1="549.5" y1="256.5" x2="549.5" y2="321.5" stroke="#8e98a8" stroke-width="1"/>
<line x1="549.5" y1="327.5" x2="549.5" y2="401.5" stroke="#8e98a8" stroke-width="1"/>
<g clip-path="url(#cmain)">
<line x1="14" y1="205" x2="897" y2="205" stroke="#aa2834" stroke-width="2"/>
<line x1="14" y1="231.5" x2="897" y2="231.5" stroke="#dfe2e6" stroke-width="1"/>
<line x1="14" y1="238.5" x2="897" y2="238.5" stroke="#0e6e10" stroke-width="1"/><line x1="14" y1="239.5" x2="897" y2="239.5" stroke="#5ad05a" stroke-width="1"/>
<path d="M14.0,103.2 C16.3,102.5 23.3,100.4 27.9,99.0 C32.5,97.6 36.5,96.6 41.8,94.9 C47.1,93.1 54.7,89.7 59.8,88.6 C64.9,87.6 67.9,88.7 72.3,88.6 C76.7,88.5 83.0,88.1 86.2,87.9 C89.5,87.7 87.0,86.9 91.8,87.2 C96.5,87.6 109.8,89.2 114.8,90.0 C119.8,90.8 118.3,90.9 121.8,92.1 C125.2,93.2 131.0,95.2 135.7,96.9 C140.3,98.7 144.9,100.5 149.6,102.5 C154.2,104.5 159.7,107.7 163.4,108.8 C167.1,109.8 169.4,108.9 171.8,108.8 C174.2,108.6 172.2,109.0 177.9,108.1 C183.5,107.1 196.9,105.0 205.7,103.2 C214.5,101.3 223.7,98.3 230.7,96.9 C237.6,95.6 241.8,95.7 247.3,94.9 C252.9,94.1 259.4,92.8 264.0,92.1 C268.6,91.4 268.6,90.8 275.1,90.7 C281.6,90.6 296.4,91.1 302.9,91.4 C309.4,91.7 309.4,92.2 314.0,92.4 C318.6,92.5 326.0,92.2 330.7,92.4 C335.3,92.5 335.3,92.7 341.8,93.1 C348.3,93.4 363.1,94.2 369.6,94.4 C376.0,94.7 374.9,94.4 380.7,94.4 C386.5,94.4 399.2,94.1 404.3,94.4 C409.4,94.8 405.4,96.4 411.2,96.5 C417.0,96.6 432.1,95.3 439.0,95.1 C445.9,95.0 446.4,95.5 452.9,95.8 C459.4,96.2 471.4,96.6 477.9,97.4 C484.4,98.1 486.0,99.2 491.8,100.1 C497.6,101.1 506.8,101.9 512.6,102.9 C518.4,104.0 521.9,105.2 526.5,106.4 C531.1,107.5 536.9,109.3 540.4,109.9 C543.9,110.4 543.4,109.7 547.3,109.9 C551.3,110.0 559.4,109.7 564.0,110.6 C568.6,111.4 565.3,109.8 575.1,114.7 C585.0,119.6 611.8,134.3 623.1,140.0 C634.3,145.7 635.8,146.4 642.5,149.0 C649.2,151.7 655.2,153.2 663.3,156.0 C671.4,158.8 681.9,162.5 691.1,165.7 C700.4,168.9 710.1,172.7 718.9,175.4 C727.7,178.2 737.4,180.4 743.9,182.2 C750.4,184.1 753.1,185.3 757.8,186.4 C762.4,187.4 767.0,187.4 771.7,188.5 C776.3,189.5 780.9,191.5 785.6,192.6 C790.2,193.8 794.8,194.5 799.4,195.4 C804.1,196.3 808.7,197.3 813.3,198.2 C818.0,199.1 823.1,200.0 827.2,201.0 C831.4,201.9 834.9,203.1 838.3,203.8 C841.8,204.4 846.4,204.9 848.1,205.1" fill="none" stroke="#b82830" stroke-width="1.35" stroke-linejoin="round"/>
<path d="M14.0,96.9 C16.3,95.8 23.3,92.3 27.9,90.0 C32.5,87.7 36.7,85.6 41.8,83.1 C46.9,80.5 53.4,76.1 58.4,74.7 C63.5,73.3 69.1,74.4 72.3,74.7 C75.6,75.1 75.1,76.5 77.9,76.8 C80.7,77.2 85.8,76.2 89.0,76.8 C92.2,77.4 92.1,77.7 97.3,80.3 C102.6,82.8 115.2,89.1 120.4,92.1 C125.6,95.1 126.2,96.4 128.7,98.3 C131.3,100.3 133.4,101.8 135.7,103.9 C138.0,106.0 140.3,108.6 142.6,110.8 C144.9,113.0 147.2,115.1 149.6,117.1 C151.9,119.1 154.2,121.0 156.5,122.6 C158.8,124.3 161.4,126.1 163.4,126.8 C165.5,127.5 165.4,128.8 169.0,126.8 C172.6,124.8 178.7,119.3 184.8,115.0 C190.9,110.7 198.0,105.6 205.7,101.1 C213.3,96.6 224.6,90.6 230.7,87.9 C236.7,85.3 237.1,85.8 241.8,85.1 C246.4,84.4 252.9,84.0 258.4,83.8 C264.0,83.5 270.0,83.2 275.1,83.8 C280.2,84.3 284.4,86.6 289.0,87.2 C293.6,87.8 299.2,87.0 302.9,87.2 C306.6,87.5 308.0,88.0 311.2,88.6 C314.5,89.2 319.1,90.2 322.3,91.0 C325.6,91.7 327.4,92.5 330.7,93.1 C333.9,93.6 337.6,94.2 341.8,94.4 C345.9,94.7 351.0,94.4 355.7,94.4 C360.3,94.4 365.4,94.2 369.6,94.4 C373.7,94.7 377.9,95.4 380.7,95.8 C383.4,96.3 383.0,97.1 386.2,97.2 C389.5,97.3 396.4,96.3 400.1,96.5 C403.8,96.8 405.2,98.5 408.4,98.6 C411.7,98.7 415.6,97.6 419.6,97.2 C423.5,96.9 427.7,96.8 432.1,96.5 C436.5,96.3 442.5,95.8 445.9,95.8 C449.4,95.8 450.6,96.4 452.9,96.5 C455.2,96.6 458.0,96.5 459.8,96.5 C461.7,96.6 461.0,95.9 464.0,96.7 C467.0,97.4 473.3,99.4 477.9,100.8 C482.5,102.2 487.1,103.5 491.8,105.0 C496.4,106.5 501.0,108.5 505.7,109.9 C510.3,111.2 514.9,111.6 519.6,113.3 C524.2,115.1 529.7,119.0 533.4,120.3 C537.1,121.6 539.5,121.2 541.8,121.0 C544.1,120.7 544.1,119.1 547.3,118.9 C550.6,118.7 556.6,118.1 561.2,119.6 C565.9,121.1 570.1,124.5 575.1,127.9 C580.1,131.3 585.7,135.9 591.1,140.0 C596.6,144.1 602.7,148.3 607.8,152.5 C612.9,156.7 616.6,160.9 621.7,165.0 C626.8,169.1 632.5,173.8 638.3,176.8 C644.1,179.8 649.9,180.9 656.4,183.1 C662.9,185.3 670.3,187.9 677.2,190.0 C684.2,192.1 693.0,194.1 698.1,195.6 C703.1,197.1 704.3,198.2 707.8,199.0 C711.2,199.8 713.8,199.9 718.9,200.4 C724.0,201.0 733.7,201.3 738.3,202.4 C743.0,203.4 743.9,205.4 746.7,206.5 C749.4,207.7 752.2,209.1 755.0,209.3 C757.8,209.5 760.6,208.5 763.3,207.9 C766.1,207.3 769.1,205.9 771.7,205.8 C774.2,205.7 775.8,206.5 778.6,207.2 C781.4,207.9 784.9,209.2 788.3,210.0 C791.8,210.8 795.3,211.6 799.4,212.1 C803.6,212.5 808.7,211.9 813.3,212.8 C818.0,213.7 823.5,216.4 827.2,217.6 C830.9,218.9 832.1,219.8 835.6,220.4 C839.0,221.0 846.0,221.0 848.1,221.1" fill="none" stroke="#1c1cb0" stroke-width="1.3" stroke-linejoin="round"/>
<line x1="16.5" y1="69.2" x2="16.5" y2="84.4" stroke="#ec8a48" stroke-width="1"/>
<rect x="15.5" y="72.6" width="2" height="7.6" fill="#f8a868" stroke="#ec8a48" stroke-width="1"/>
<line x1="20.5" y1="67.8" x2="20.5" y2="82.4" stroke="#ec8a48" stroke-width="1"/>
<rect x="19.5" y="71.9" width="2" height="9.7" fill="#f8a868" stroke="#ec8a48" stroke-width="1"/>
<line x1="24.5" y1="68.5" x2="24.5" y2="83.8" stroke="#ec8a48" stroke-width="1"/>
<rect x="23.5" y="72.6" width="2" height="8.3" fill="#f8a868" stroke="#ec8a48" stroke-width="1"/>
<line x1="29.5" y1="66.4" x2="29.5" y2="73.3" stroke="#ec8a48" stroke-width="1"/>
<rect x="28.5" y="68.5" width="2" height="2.8" fill="#f8a868" stroke="#ec8a48" stroke-width="1"/>
<line x1="33.5" y1="65.0" x2="33.5" y2="71.2" stroke="#ec8a48" stroke-width="1"/>
<rect x="32.5" y="67.5" width="2" height="2.0" fill="#6a3620" stroke="#ec8a48" stroke-width="1"/>
<line x1="37.5" y1="62.9" x2="37.5" y2="71.2" stroke="#ec8a48" stroke-width="1"/>
<rect x="36.5" y="65.2" width="2" height="2.0" fill="#6a3620" stroke="#ec8a48" stroke-width="1"/>
<line x1="41.5" y1="61.5" x2="41.5" y2="71.2" stroke="#ec8a48" stroke-width="1"/>
<rect x="40.5" y="63.3" width="2" height="2.0" fill="#6a3620" stroke="#ec8a48" stroke-width="1"/>
<line x1="45.5" y1="59.4" x2="45.5" y2="69.9" stroke="#ec8a48" stroke-width="1"/>
<rect x="44.5" y="60.5" width="2" height="2.0" fill="#6a3620" stroke="#ec8a48" stroke-width="1"/>
<line x1="49.5" y1="53.9" x2="49.5" y2="65.7" stroke="#ec8a48" stroke-width="1"/>
<rect x="48.5" y="55.3" width="2" height="5.6" fill="#f8a868" stroke="#ec8a48" stroke-width="1"/>
<line x1="53.5" y1="53.2" x2="53.5" y2="58.8" stroke="#ec8a48" stroke-width="1"/>
<rect x="52.5" y="53.9" width="2" height="3.5" fill="#6a3620" stroke="#ec8a48" stroke-width="1"/>
<line x1="57.5" y1="54.6" x2="57.5" y2="61.5" stroke="#ec8a48" stroke-width="1"/>
<rect x="56.5" y="56.0" width="2" height="2.1" fill="#6a3620" stroke="#ec8a48" stroke-width="1"/>
<line x1="61.5" y1="56.0" x2="61.5" y2="63.6" stroke="#ec8a48" stroke-width="1"/>
<rect x="60.5" y="57.8" width="2" height="2.0" fill="#6a3620" stroke="#ec8a48" stroke-width="1"/>
<line x1="65.5" y1="58.1" x2="65.5" y2="69.9" stroke="#ec8a48" stroke-width="1"/>
<rect x="64.5" y="59.4" width="2" height="10.4" fill="#6a3620" stroke="#ec8a48" stroke-width="1"/>
<line x1="70.5" y1="67.1" x2="70.5" y2="82.4" stroke="#ec8a48" stroke-width="1"/>
<rect x="69.5" y="69.2" width="2" height="8.3" fill="#6a3620" stroke="#ec8a48" stroke-width="1"/>
<line x1="74.5" y1="75.4" x2="74.5" y2="95.6" stroke="#ec8a48" stroke-width="1"/>
<rect x="73.5" y="76.8" width="2" height="13.9" fill="#6a3620" stroke="#ec8a48" stroke-width="1"/>
<line x1="78.5" y1="85.1" x2="78.5" y2="94.2" stroke="#ec8a48" stroke-width="1"/>
<rect x="77.5" y="87.6" width="2" height="2.0" fill="#6a3620" stroke="#ec8a48" stroke-width="1"/>
<line x1="82.5" y1="81.0" x2="82.5" y2="108.1" stroke="#ec8a48" stroke-width="1"/>
<rect x="81.5" y="83.1" width="2" height="4.9" fill="#f8a868" stroke="#ec8a48" stroke-width="1"/>
<line x1="86.5" y1="53.9" x2="86.5" y2="92.8" stroke="#ec8a48" stroke-width="1"/>
<rect x="85.5" y="78.2" width="2" height="3.5" fill="#f8a868" stroke="#ec8a48" stroke-width="1"/>
<line x1="90.5" y1="65.7" x2="90.5" y2="87.9" stroke="#ec8a48" stroke-width="1"/>
<rect x="89.5" y="76.8" width="2" height="9.7" fill="#6a3620" stroke="#ec8a48" stroke-width="1"/>
<line x1="94.5" y1="71.2" x2="94.5" y2="102.5" stroke="#ec8a48" stroke-width="1"/>
<rect x="93.5" y="80.3" width="2" height="21.5" fill="#6a3620" stroke="#ec8a48" stroke-width="1"/>
<line x1="98.5" y1="83.8" x2="98.5" y2="103.2" stroke="#ec8a48" stroke-width="1"/>
<rect x="97.5" y="100.4" width="2" height="2.0" fill="#6a3620" stroke="#ec8a48" stroke-width="1"/>
<line x1="102.5" y1="87.2" x2="102.5" y2="100.4" stroke="#ec8a48" stroke-width="1"/>
<rect x="101.5" y="90.7" width="2" height="8.3" fill="#f8a868" stroke="#ec8a48" stroke-width="1"/>
<line x1="106.5" y1="85.1" x2="106.5" y2="99.7" stroke="#ec8a48" stroke-width="1"/>
<rect x="105.5" y="90.0" width="2" height="6.9" fill="#6a3620" stroke="#ec8a48" stroke-width="1"/>
<line x1="111.5" y1="90.0" x2="111.5" y2="98.3" stroke="#ec8a48" stroke-width="1"/>
<rect x="110.5" y="95.2" width="2" height="2.0" fill="#6a3620" stroke="#ec8a48" stroke-width="1"/>
<line x1="115.5" y1="92.8" x2="115.5" y2="109.4" stroke="#ec8a48" stroke-width="1"/>
<rect x="114.5" y="96.9" width="2" height="8.3" fill="#6a3620" stroke="#ec8a48" stroke-width="1"/>
<line x1="119.5" y1="101.8" x2="119.5" y2="127.5" stroke="#ec8a48" stroke-width="1"/>
<rect x="118.5" y="103.9" width="2" height="23.6" fill="#6a3620" stroke="#ec8a48" stroke-width="1"/>
<line x1="123.5" y1="109.4" x2="123.5" y2="131.7" stroke="#ec8a48" stroke-width="1"/>
<rect x="122.5" y="122.6" width="2" height="4.2" fill="#6a3620" stroke="#ec8a48" stroke-width="1"/>
<line x1="127.5" y1="117.1" x2="127.5" y2="133.8" stroke="#ec8a48" stroke-width="1"/>
<rect x="126.5" y="121.2" width="2" height="9.0" fill="#6a3620" stroke="#ec8a48" stroke-width="1"/>
<line x1="131.5" y1="124.7" x2="131.5" y2="138.6" stroke="#ec8a48" stroke-width="1"/>
<rect x="130.5" y="127.5" width="2" height="2.1" fill="#6a3620" stroke="#ec8a48" stroke-width="1"/>
<line x1="135.5" y1="123.3" x2="135.5" y2="137.2" stroke="#ec8a48" stroke-width="1"/>
<rect x="134.5" y="126.1" width="2" height="9.7" fill="#6a3620" stroke="#ec8a48" stroke-width="1"/>
<line x1="139.5" y1="132.4" x2="139.5" y2="144.2" stroke="#ec8a48" stroke-width="1"/>
<rect x="138.5" y="134.4" width="2" height="8.3" fill="#6a3620" stroke="#ec8a48" stroke-width="1"/>
<line x1="143.5" y1="135.1" x2="143.5" y2="156.7" stroke="#ec8a48" stroke-width="1"/>
<rect x="142.5" y="142.1" width="2" height="11.1" fill="#6a3620" stroke="#ec8a48" stroke-width="1"/>
<line x1="147.5" y1="140.0" x2="147.5" y2="162.2" stroke="#ec8a48" stroke-width="1"/>
<rect x="146.5" y="153.2" width="2" height="6.2" fill="#6a3620" stroke="#ec8a48" stroke-width="1"/>
<line x1="152.5" y1="151.1" x2="152.5" y2="162.9" stroke="#ec8a48" stroke-width="1"/>
<rect x="151.5" y="153.2" width="2" height="4.9" fill="#f8a868" stroke="#ec8a48" stroke-width="1"/>
<line x1="156.5" y1="150.4" x2="156.5" y2="158.1" stroke="#ec8a48" stroke-width="1"/>
<rect x="155.5" y="152.2" width="2" height="2.0" fill="#6a3620" stroke="#ec8a48" stroke-width="1"/>
<line x1="160.5" y1="150.4" x2="160.5" y2="156.7" stroke="#ec8a48" stroke-width="1"/>
<rect x="159.5" y="151.8" width="2" height="2.8" fill="#6a3620" stroke="#ec8a48" stroke-width="1"/>
<line x1="164.5" y1="146.9" x2="164.5" y2="162.2" stroke="#ec8a48" stroke-width="1"/>
<rect x="163.5" y="152.2" width="2" height="2.0" fill="#6a3620" stroke="#ec8a48" stroke-width="1"/>
<line x1="168.5" y1="128.2" x2="168.5" y2="158.8" stroke="#ec8a48" stroke-width="1"/>
<rect x="167.5" y="130.3" width="2" height="20.8" fill="#f8a868" stroke="#ec8a48" stroke-width="1"/>
<line x1="172.5" y1="84.4" x2="172.5" y2="134.4" stroke="#ec8a48" stroke-width="1"/>
<rect x="171.5" y="88.6" width="2" height="41.7" fill="#f8a868" stroke="#ec8a48" stroke-width="1"/>
<line x1="176.5" y1="81.7" x2="176.5" y2="95.6" stroke="#ec8a48" stroke-width="1"/>
<rect x="175.5" y="84.4" width="2" height="2.8" fill="#6a3620" stroke="#ec8a48" stroke-width="1"/>
<line x1="180.5" y1="80.3" x2="180.5" y2="92.8" stroke="#ec8a48" stroke-width="1"/>
<rect x="179.5" y="84.4" width="2" height="3.5" fill="#6a3620" stroke="#ec8a48" stroke-width="1"/>
<line x1="184.5" y1="85.1" x2="184.5" y2="96.9" stroke="#ec8a48" stroke-width="1"/>
<rect x="183.5" y="87.2" width="2" height="5.6" fill="#6a3620" stroke="#ec8a48" stroke-width="1"/>
<line x1="188.5" y1="84.4" x2="188.5" y2="94.9" stroke="#ec8a48" stroke-width="1"/>
<rect x="187.5" y="89.7" width="2" height="2.0" fill="#6a3620" stroke="#ec8a48" stroke-width="1"/>
<line x1="193.5" y1="64.3" x2="193.5" y2="93.5" stroke="#ec8a48" stroke-width="1"/>
<rect x="192.5" y="75.4" width="2" height="13.2" fill="#f8a868" stroke="#ec8a48" stroke-width="1"/>
<line x1="197.5" y1="66.4" x2="197.5" y2="90.7" stroke="#ec8a48" stroke-width="1"/>
<rect x="196.5" y="74.7" width="2" height="10.4" fill="#6a3620" stroke="#ec8a48" stroke-width="1"/>
<line x1="201.5" y1="74.0" x2="201.5" y2="85.8" stroke="#ec8a48" stroke-width="1"/>
<rect x="200.5" y="76.1" width="2" height="8.3" fill="#6a3620" stroke="#ec8a48" stroke-width="1"/>
<line x1="205.5" y1="73.3" x2="205.5" y2="83.1" stroke="#ec8a48" stroke-width="1"/>
<rect x="204.5" y="76.8" width="2" height="2.1" fill="#6a3620" stroke="#ec8a48" stroke-width="1"/>
<line x1="209.5" y1="78.9" x2="209.5" y2="85.8" stroke="#ec8a48" stroke-width="1"/>
<rect x="208.5" y="78.7" width="2" height="2.0" fill="#6a3620" stroke="#ec8a48" stroke-width="1"/>
<line x1="213.5" y1="64.3" x2="213.5" y2="81.7" stroke="#ec8a48" stroke-width="1"/>
<rect x="212.5" y="70.6" width="2" height="9.0" fill="#f8a868" stroke="#ec8a48" stroke-width="1"/>
<line x1="217.5" y1="56.7" x2="217.5" y2="72.6" stroke="#ec8a48" stroke-width="1"/>
<rect x="216.5" y="60.5" width="2" height="2.0" fill="#6a3620" stroke="#ec8a48" stroke-width="1"/>
<line x1="221.5" y1="56.0" x2="221.5" y2="71.2" stroke="#ec8a48" stroke-width="1"/>
<rect x="220.5" y="62.9" width="2" height="4.9" fill="#f8a868" stroke="#ec8a48" stroke-width="1"/>
<line x1="225.5" y1="61.5" x2="225.5" y2="69.9" stroke="#ec8a48" stroke-width="1"/>
<rect x="224.5" y="62.2" width="2" height="6.9" fill="#6a3620" stroke="#ec8a48" stroke-width="1"/>
<line x1="229.5" y1="65.7" x2="229.5" y2="72.6" stroke="#ec8a48" stroke-width="1"/>
<rect x="228.5" y="69.2" width="2" height="2.1" fill="#6a3620" stroke="#ec8a48" stroke-width="1"/>
<line x1="234.5" y1="69.2" x2="234.5" y2="76.1" stroke="#ec8a48" stroke-width="1"/>
<rect x="233.5" y="70.2" width="2" height="2.0" fill="#6a3620" stroke="#ec8a48" stroke-width="1"/>
<line x1="238.5" y1="67.1" x2="238.5" y2="78.2" stroke="#ec8a48" stroke-width="1"/>
<rect x="237.5" y="72.6" width="2" height="3.5" fill="#6a3620" stroke="#ec8a48" stroke-width="1"/>
<line x1="242.5" y1="71.9" x2="242.5" y2="87.9" stroke="#ec8a48" stroke-width="1"/>
<rect x="241.5" y="80.0" width="2" height="2.0" fill="#6a3620" stroke="#ec8a48" stroke-width="1"/>
<line x1="246.5" y1="69.9" x2="246.5" y2="88.6" stroke="#ec8a48" stroke-width="1"/>
<rect x="245.5" y="74.7" width="2" height="9.7" fill="#6a3620" stroke="#ec8a48" stroke-width="1"/>
<line x1="250.5" y1="74.0" x2="250.5" y2="86.5" stroke="#ec8a48" stroke-width="1"/>
<rect x="249.5" y="78.2" width="2" height="4.9" fill="#f8a868" stroke="#ec8a48" stroke-width="1"/>
<line x1="254.5" y1="75.4" x2="254.5" y2="83.1" stroke="#ec8a48" stroke-width="1"/>
<rect x="253.5" y="76.8" width="2" height="3.5" fill="#6a3620" stroke="#ec8a48" stroke-width="1"/>
<line x1="258.5" y1="76.1" x2="258.5" y2="83.1" stroke="#ec8a48" stroke-width="1"/>
<rect x="257.5" y="79.3" width="2" height="2.0" fill="#6a3620" stroke="#ec8a48" stroke-width="1"/>
<line x1="262.5" y1="73.3" x2="262.5" y2="83.1" stroke="#ec8a48" stroke-width="1"/>
<rect x="261.5" y="78.6" width="2" height="2.0" fill="#6a3620" stroke="#ec8a48" stroke-width="1"/>
<line x1="266.5" y1="74.0" x2="266.5" y2="84.4" stroke="#ec8a48" stroke-width="1"/>
<rect x="265.5" y="77.5" width="2" height="2.8" fill="#6a3620" stroke="#ec8a48" stroke-width="1"/>
<line x1="270.5" y1="78.9" x2="270.5" y2="90.0" stroke="#ec8a48" stroke-width="1"/>
<rect x="269.5" y="80.3" width="2" height="5.6" fill="#6a3620" stroke="#ec8a48" stroke-width="1"/>
<line x1="275.5" y1="83.8" x2="275.5" y2="90.7" stroke="#ec8a48" stroke-width="1"/>
<rect x="274.5" y="84.8" width="2" height="2.0" fill="#6a3620" stroke="#ec8a48" stroke-width="1"/>
<line x1="279.5" y1="87.9" x2="279.5" y2="92.8" stroke="#ec8a48" stroke-width="1"/>
<rect x="278.5" y="88.3" width="2" height="2.0" fill="#6a3620" stroke="#ec8a48" stroke-width="1"/>
<line x1="283.5" y1="90.0" x2="283.5" y2="97.6" stroke="#ec8a48" stroke-width="1"/>
<rect x="282.5" y="91.1" width="2" height="2.0" fill="#6a3620" stroke="#ec8a48" stroke-width="1"/>
<line x1="287.5" y1="92.1" x2="287.5" y2="104.6" stroke="#ec8a48" stroke-width="1"/>
<rect x="286.5" y="93.5" width="2" height="10.4" fill="#6a3620" stroke="#ec8a48" stroke-width="1"/>
<line x1="291.5" y1="79.6" x2="291.5" y2="104.6" stroke="#ec8a48" stroke-width="1"/>
<rect x="290.5" y="86.5" width="2" height="16.7" fill="#f8a868" stroke="#ec8a48" stroke-width="1"/>
<line x1="295.5" y1="76.8" x2="295.5" y2="95.6" stroke="#ec8a48" stroke-width="1"/>
<rect x="294.5" y="84.4" width="2" height="3.5" fill="#6a3620" stroke="#ec8a48" stroke-width="1"/>
<line x1="299.5" y1="87.9" x2="299.5" y2="95.6" stroke="#ec8a48" stroke-width="1"/>
<rect x="298.5" y="91.1" width="2" height="2.0" fill="#6a3620" stroke="#ec8a48" stroke-width="1"/>
<line x1="303.5" y1="88.6" x2="303.5" y2="94.9" stroke="#ec8a48" stroke-width="1"/>
<rect x="302.5" y="91.4" width="2" height="2.0" fill="#6a3620" stroke="#ec8a48" stroke-width="1"/>
<line x1="307.5" y1="89.3" x2="307.5" y2="96.9" stroke="#ec8a48" stroke-width="1"/>
<rect x="306.5" y="90.4" width="2" height="2.0" fill="#6a3620" stroke="#ec8a48" stroke-width="1"/>
<line x1="311.5" y1="88.6" x2="311.5" y2="103.9" stroke="#ec8a48" stroke-width="1"/>
<rect x="310.5" y="92.1" width="2" height="10.4" fill="#6a3620" stroke="#ec8a48" stroke-width="1"/>
<line x1="316.5" y1="93.1" x2="316.5" y2="109.0" stroke="#ec8a48" stroke-width="1"/>
<rect x="315.5" y="97.2" width="2" height="8.3" fill="#6a3620" stroke="#ec8a48" stroke-width="1"/>
<line x1="320.5" y1="94.4" x2="320.5" y2="109.7" stroke="#ec8a48" stroke-width="1"/>
<rect x="319.5" y="98.3" width="2" height="2.0" fill="#6a3620" stroke="#ec8a48" stroke-width="1"/>
<line x1="324.5" y1="96.5" x2="324.5" y2="102.8" stroke="#ec8a48" stroke-width="1"/>
<rect x="323.5" y="97.6" width="2" height="2.0" fill="#6a3620" stroke="#ec8a48" stroke-width="1"/>
<line x1="328.5" y1="94.4" x2="328.5" y2="100.7" stroke="#ec8a48" stroke-width="1"/>
<rect x="327.5" y="96.2" width="2" height="2.0" fill="#6a3620" stroke="#ec8a48" stroke-width="1"/>
<line x1="332.5" y1="92.4" x2="332.5" y2="101.4" stroke="#ec8a48" stroke-width="1"/>
<rect x="331.5" y="95.8" width="2" height="4.9" fill="#6a3620" stroke="#ec8a48" stroke-width="1"/>
<line x1="336.5" y1="97.2" x2="336.5" y2="104.9" stroke="#ec8a48" stroke-width="1"/>
<rect x="335.5" y="98.3" width="2" height="2.0" fill="#6a3620" stroke="#ec8a48" stroke-width="1"/>
<line x1="340.5" y1="94.4" x2="340.5" y2="106.2" stroke="#ec8a48" stroke-width="1"/>
<rect x="339.5" y="100.0" width="2" height="2.8" fill="#6a3620" stroke="#ec8a48" stroke-width="1"/>
<line x1="344.5" y1="91.0" x2="344.5" y2="107.6" stroke="#ec8a48" stroke-width="1"/>
<rect x="343.5" y="96.5" width="2" height="10.4" fill="#6a3620" stroke="#ec8a48" stroke-width="1"/>
<line x1="348.5" y1="96.5" x2="348.5" y2="107.6" stroke="#ec8a48" stroke-width="1"/>
<rect x="347.5" y="97.2" width="2" height="8.3" fill="#f8a868" stroke="#ec8a48" stroke-width="1"/>
<line x1="352.5" y1="87.5" x2="352.5" y2="97.9" stroke="#ec8a48" stroke-width="1"/>
<rect x="351.5" y="91.7" width="2" height="2.8" fill="#6a3620" stroke="#ec8a48" stroke-width="1"/>
<line x1="357.5" y1="90.3" x2="357.5" y2="100.0" stroke="#ec8a48" stroke-width="1"/>
<rect x="356.5" y="93.8" width="2" height="5.6" fill="#6a3620" stroke="#ec8a48" stroke-width="1"/>
<line x1="361.5" y1="84.0" x2="361.5" y2="101.4" stroke="#ec8a48" stroke-width="1"/>
<rect x="360.5" y="88.2" width="2" height="9.0" fill="#f8a868" stroke="#ec8a48" stroke-width="1"/>
<line x1="365.5" y1="81.9" x2="365.5" y2="93.1" stroke="#ec8a48" stroke-width="1"/>
<rect x="364.5" y="86.8" width="2" height="4.2" fill="#6a3620" stroke="#ec8a48" stroke-width="1"/>
<line x1="369.5" y1="83.3" x2="369.5" y2="95.8" stroke="#ec8a48" stroke-width="1"/>
<rect x="368.5" y="91.7" width="2" height="2.8" fill="#6a3620" stroke="#ec8a48" stroke-width="1"/>
<line x1="373.5" y1="91.0" x2="373.5" y2="101.4" stroke="#ec8a48" stroke-width="1"/>
<rect x="372.5" y="95.1" width="2" height="6.2" fill="#6a3620" stroke="#ec8a48" stroke-width="1"/>
<line x1="377.5" y1="95.8" x2="377.5" y2="103.5" stroke="#ec8a48" stroke-width="1"/>
<rect x="376.5" y="98.3" width="2" height="2.0" fill="#6a3620" stroke="#ec8a48" stroke-width="1"/>
<line x1="381.5" y1="97.9" x2="381.5" y2="105.6" stroke="#ec8a48" stroke-width="1"/>
<rect x="380.5" y="100.0" width="2" height="4.9" fill="#6a3620" stroke="#ec8a48" stroke-width="1"/>
<line x1="385.5" y1="97.9" x2="385.5" y2="107.6" stroke="#ec8a48" stroke-width="1"/>
<rect x="384.5" y="101.5" width="2" height="2.0" fill="#6a3620" stroke="#ec8a48" stroke-width="1"/>
<line x1="389.5" y1="90.3" x2="389.5" y2="104.2" stroke="#ec8a48" stroke-width="1"/>
<rect x="388.5" y="98.3" width="2" height="2.0" fill="#6a3620" stroke="#ec8a48" stroke-width="1"/>
<line x1="393.5" y1="93.1" x2="393.5" y2="105.6" stroke="#ec8a48" stroke-width="1"/>
<rect x="392.5" y="95.5" width="2" height="2.0" fill="#6a3620" stroke="#ec8a48" stroke-width="1"/>
<line x1="398.5" y1="91.0" x2="398.5" y2="97.9" stroke="#ec8a48" stroke-width="1"/>
<rect x="397.5" y="93.4" width="2" height="2.0" fill="#6a3620" stroke="#ec8a48" stroke-width="1"/>
<line x1="402.5" y1="97.2" x2="402.5" y2="104.2" stroke="#ec8a48" stroke-width="1"/>
<rect x="401.5" y="99.3" width="2" height="2.8" fill="#6a3620" stroke="#ec8a48" stroke-width="1"/>
<line x1="406.5" y1="99.3" x2="406.5" y2="104.9" stroke="#ec8a48" stroke-width="1"/>
<rect x="405.5" y="100.4" width="2" height="2.0" fill="#6a3620" stroke="#ec8a48" stroke-width="1"/>
<line x1="410.5" y1="97.9" x2="410.5" y2="105.6" stroke="#ec8a48" stroke-width="1"/>
<rect x="409.5" y="99.7" width="2" height="2.0" fill="#6a3620" stroke="#ec8a48" stroke-width="1"/>
<line x1="414.5" y1="97.9" x2="414.5" y2="115.3" stroke="#ec8a48" stroke-width="1"/>
<rect x="413.5" y="100.7" width="2" height="13.9" fill="#6a3620" stroke="#ec8a48" stroke-width="1"/>
<line x1="418.5" y1="78.5" x2="418.5" y2="115.3" stroke="#ec8a48" stroke-width="1"/>
<rect x="417.5" y="88.2" width="2" height="24.3" fill="#f8a868" stroke="#ec8a48" stroke-width="1"/>
<line x1="422.5" y1="85.4" x2="422.5" y2="95.8" stroke="#ec8a48" stroke-width="1"/>
<rect x="421.5" y="86.8" width="2" height="2.8" fill="#6a3620" stroke="#ec8a48" stroke-width="1"/>
<line x1="426.5" y1="86.8" x2="426.5" y2="95.1" stroke="#ec8a48" stroke-width="1"/>
<rect x="425.5" y="88.6" width="2" height="2.0" fill="#6a3620" stroke="#ec8a48" stroke-width="1"/>
<line x1="430.5" y1="88.2" x2="430.5" y2="94.4" stroke="#ec8a48" stroke-width="1"/>
<rect x="429.5" y="90.3" width="2" height="4.2" fill="#6a3620" stroke="#ec8a48" stroke-width="1"/>
<line x1="434.5" y1="91.7" x2="434.5" y2="104.9" stroke="#ec8a48" stroke-width="1"/>
<rect x="433.5" y="93.8" width="2" height="9.0" fill="#6a3620" stroke="#ec8a48" stroke-width="1"/>
<line x1="439.5" y1="84.0" x2="439.5" y2="104.2" stroke="#ec8a48" stroke-width="1"/>
<rect x="438.5" y="88.2" width="2" height="12.5" fill="#f8a868" stroke="#ec8a48" stroke-width="1"/>
<line x1="443.5" y1="85.4" x2="443.5" y2="95.1" stroke="#ec8a48" stroke-width="1"/>
<rect x="442.5" y="86.8" width="2" height="6.2" fill="#6a3620" stroke="#ec8a48" stroke-width="1"/>
<line x1="447.5" y1="88.2" x2="447.5" y2="99.3" stroke="#ec8a48" stroke-width="1"/>
<rect x="446.5" y="91.7" width="2" height="6.2" fill="#6a3620" stroke="#ec8a48" stroke-width="1"/>
<line x1="451.5" y1="93.8" x2="451.5" y2="100.7" stroke="#ec8a48" stroke-width="1"/>
<rect x="450.5" y="97.6" width="2" height="2.0" fill="#6a3620" stroke="#ec8a48" stroke-width="1"/>
<line x1="455.5" y1="97.2" x2="455.5" y2="102.8" stroke="#ec8a48" stroke-width="1"/>
<rect x="454.5" y="97.6" width="2" height="2.0" fill="#6a3620" stroke="#ec8a48" stroke-width="1"/>
<line x1="459.5" y1="91.0" x2="459.5" y2="103.5" stroke="#ec8a48" stroke-width="1"/>
<rect x="458.5" y="95.8" width="2" height="2.1" fill="#6a3620" stroke="#ec8a48" stroke-width="1"/>
<line x1="463.5" y1="83.3" x2="463.5" y2="98.6" stroke="#ec8a48" stroke-width="1"/>
<rect x="462.5" y="94.4" width="2" height="2.1" fill="#6a3620" stroke="#ec8a48" stroke-width="1"/>
<line x1="467.5" y1="97.4" x2="467.5" y2="114.7" stroke="#ec8a48" stroke-width="1"/>
<rect x="466.5" y="98.8" width="2" height="9.0" fill="#6a3620" stroke="#ec8a48" stroke-width="1"/>
<line x1="471.5" y1="105.7" x2="471.5" y2="114.0" stroke="#ec8a48" stroke-width="1"/>
<rect x="470.5" y="106.4" width="2" height="6.9" fill="#6a3620" stroke="#ec8a48" stroke-width="1"/>
<line x1="475.5" y1="105.7" x2="475.5" y2="117.5" stroke="#ec8a48" stroke-width="1"/>
<rect x="474.5" y="112.3" width="2" height="2.0" fill="#6a3620" stroke="#ec8a48" stroke-width="1"/>
<line x1="480.5" y1="113.3" x2="480.5" y2="119.6" stroke="#ec8a48" stroke-width="1"/>
<rect x="479.5" y="115.4" width="2" height="2.1" fill="#6a3620" stroke="#ec8a48" stroke-width="1"/>
<line x1="484.5" y1="109.2" x2="484.5" y2="121.7" stroke="#ec8a48" stroke-width="1"/>
<rect x="483.5" y="112.6" width="2" height="4.2" fill="#f8a868" stroke="#ec8a48" stroke-width="1"/>
<line x1="488.5" y1="105.7" x2="488.5" y2="115.4" stroke="#ec8a48" stroke-width="1"/>
<rect x="487.5" y="108.2" width="2" height="2.0" fill="#6a3620" stroke="#ec8a48" stroke-width="1"/>
<line x1="492.5" y1="107.1" x2="492.5" y2="122.4" stroke="#ec8a48" stroke-width="1"/>
<rect x="491.5" y="108.5" width="2" height="13.2" fill="#6a3620" stroke="#ec8a48" stroke-width="1"/>
<line x1="496.5" y1="116.8" x2="496.5" y2="123.8" stroke="#ec8a48" stroke-width="1"/>
<rect x="495.5" y="120.0" width="2" height="2.0" fill="#6a3620" stroke="#ec8a48" stroke-width="1"/>
<line x1="500.5" y1="116.8" x2="500.5" y2="123.8" stroke="#ec8a48" stroke-width="1"/>
<rect x="499.5" y="120.0" width="2" height="2.0" fill="#6a3620" stroke="#ec8a48" stroke-width="1"/>
<line x1="504.5" y1="118.2" x2="504.5" y2="126.5" stroke="#ec8a48" stroke-width="1"/>
<rect x="503.5" y="122.4" width="2" height="2.1" fill="#6a3620" stroke="#ec8a48" stroke-width="1"/>
<line x1="508.5" y1="120.3" x2="508.5" y2="127.2" stroke="#ec8a48" stroke-width="1"/>
<rect x="507.5" y="121.4" width="2" height="2.0" fill="#6a3620" stroke="#ec8a48" stroke-width="1"/>
<line x1="512.5" y1="111.2" x2="512.5" y2="122.4" stroke="#ec8a48" stroke-width="1"/>
<rect x="511.5" y="115.4" width="2" height="3.5" fill="#f8a868" stroke="#ec8a48" stroke-width="1"/>
<line x1="516.5" y1="112.6" x2="516.5" y2="133.5" stroke="#ec8a48" stroke-width="1"/>
<rect x="515.5" y="114.0" width="2" height="13.2" fill="#6a3620" stroke="#ec8a48" stroke-width="1"/>
<line x1="521.5" y1="124.4" x2="521.5" y2="131.4" stroke="#ec8a48" stroke-width="1"/>
<rect x="520.5" y="127.9" width="2" height="2.8" fill="#6a3620" stroke="#ec8a48" stroke-width="1"/>
<line x1="525.5" y1="129.3" x2="525.5" y2="135.6" stroke="#ec8a48" stroke-width="1"/>
<rect x="524.5" y="130.7" width="2" height="4.2" fill="#6a3620" stroke="#ec8a48" stroke-width="1"/>
<line x1="529.5" y1="132.1" x2="529.5" y2="137.6" stroke="#ec8a48" stroke-width="1"/>
<rect x="528.5" y="133.2" width="2" height="2.0" fill="#6a3620" stroke="#ec8a48" stroke-width="1"/>
<line x1="533.5" y1="133.5" x2="533.5" y2="143.9" stroke="#ec8a48" stroke-width="1"/>
<rect x="532.5" y="133.5" width="2" height="9.7" fill="#6a3620" stroke="#ec8a48" stroke-width="1"/>
<line x1="537.5" y1="127.9" x2="537.5" y2="143.9" stroke="#ec8a48" stroke-width="1"/>
<rect x="536.5" y="129.3" width="2" height="13.2" fill="#f8a868" stroke="#ec8a48" stroke-width="1"/>
<line x1="541.5" y1="123.1" x2="541.5" y2="137.6" stroke="#ec8a48" stroke-width="1"/>
<rect x="540.5" y="124.4" width="2" height="4.2" fill="#f8a868" stroke="#ec8a48" stroke-width="1"/>
<line x1="545.5" y1="107.1" x2="545.5" y2="126.5" stroke="#ec8a48" stroke-width="1"/>
<rect x="544.5" y="110.6" width="2" height="11.1" fill="#f8a868" stroke="#ec8a48" stroke-width="1"/>
<line x1="549.5" y1="105.0" x2="549.5" y2="117.5" stroke="#ec8a48" stroke-width="1"/>
<rect x="548.5" y="109.2" width="2" height="2.8" fill="#6a3620" stroke="#ec8a48" stroke-width="1"/>
<line x1="553.5" y1="111.2" x2="553.5" y2="118.2" stroke="#ec8a48" stroke-width="1"/>
<rect x="552.5" y="113.3" width="2" height="4.2" fill="#6a3620" stroke="#ec8a48" stroke-width="1"/>
<line x1="557.5" y1="114.0" x2="557.5" y2="126.5" stroke="#ec8a48" stroke-width="1"/>
<rect x="556.5" y="117.5" width="2" height="4.2" fill="#6a3620" stroke="#ec8a48" stroke-width="1"/>
<line x1="562.5" y1="118.2" x2="562.5" y2="127.2" stroke="#ec8a48" stroke-width="1"/>
<rect x="561.5" y="122.8" width="2" height="2.0" fill="#6a3620" stroke="#ec8a48" stroke-width="1"/>
<line x1="566.5" y1="123.8" x2="566.5" y2="151.5" stroke="#ec8a48" stroke-width="1"/>
<rect x="565.5" y="124.4" width="2" height="25.0" fill="#6a3620" stroke="#ec8a48" stroke-width="1"/>
<line x1="570.5" y1="146.7" x2="570.5" y2="155.7" stroke="#ec8a48" stroke-width="1"/>
<rect x="569.5" y="148.8" width="2" height="6.2" fill="#6a3620" stroke="#ec8a48" stroke-width="1"/>
<line x1="574.5" y1="150.8" x2="574.5" y2="157.8" stroke="#ec8a48" stroke-width="1"/>
<rect x="573.5" y="153.3" width="2" height="2.0" fill="#6a3620" stroke="#ec8a48" stroke-width="1"/>
<line x1="578.5" y1="152.2" x2="578.5" y2="161.2" stroke="#ec8a48" stroke-width="1"/>
<rect x="577.5" y="154.0" width="2" height="2.0" fill="#6a3620" stroke="#ec8a48" stroke-width="1"/>
<line x1="582.5" y1="146.2" x2="582.5" y2="158.8" stroke="#ec8a48" stroke-width="1"/>
<rect x="581.5" y="148.3" width="2" height="7.6" fill="#f8a868" stroke="#ec8a48" stroke-width="1"/>
<line x1="586.5" y1="144.2" x2="586.5" y2="165.7" stroke="#ec8a48" stroke-width="1"/>
<rect x="585.5" y="145.6" width="2" height="19.4" fill="#6a3620" stroke="#ec8a48" stroke-width="1"/>
<line x1="590.5" y1="162.2" x2="590.5" y2="181.7" stroke="#ec8a48" stroke-width="1"/>
<rect x="589.5" y="164.3" width="2" height="7.6" fill="#6a3620" stroke="#ec8a48" stroke-width="1"/>
<line x1="594.5" y1="168.5" x2="594.5" y2="175.4" stroke="#ec8a48" stroke-width="1"/>
<rect x="593.5" y="171.6" width="2" height="2.0" fill="#6a3620" stroke="#ec8a48" stroke-width="1"/>
<line x1="598.5" y1="171.9" x2="598.5" y2="180.3" stroke="#ec8a48" stroke-width="1"/>
<rect x="597.5" y="173.3" width="2" height="2.8" fill="#6a3620" stroke="#ec8a48" stroke-width="1"/>
<line x1="603.5" y1="174.0" x2="603.5" y2="184.4" stroke="#ec8a48" stroke-width="1"/>
<rect x="602.5" y="176.1" width="2" height="6.9" fill="#6a3620" stroke="#ec8a48" stroke-width="1"/>
<line x1="607.5" y1="180.3" x2="607.5" y2="190.7" stroke="#ec8a48" stroke-width="1"/>
<rect x="606.5" y="180.7" width="2" height="2.0" fill="#6a3620" stroke="#ec8a48" stroke-width="1"/>
<line x1="611.5" y1="177.5" x2="611.5" y2="198.3" stroke="#ec8a48" stroke-width="1"/>
<rect x="610.5" y="181.7" width="2" height="16.0" fill="#6a3620" stroke="#ec8a48" stroke-width="1"/>
<line x1="615.5" y1="192.8" x2="615.5" y2="206.7" stroke="#ec8a48" stroke-width="1"/>
<rect x="614.5" y="196.6" width="2" height="2.0" fill="#6a3620" stroke="#ec8a48" stroke-width="1"/>
<line x1="619.5" y1="189.3" x2="619.5" y2="199.7" stroke="#ec8a48" stroke-width="1"/>
<rect x="618.5" y="195.9" width="2" height="2.0" fill="#6a3620" stroke="#ec8a48" stroke-width="1"/>
<line x1="623.5" y1="189.3" x2="623.5" y2="202.5" stroke="#ec8a48" stroke-width="1"/>
<rect x="622.5" y="195.6" width="2" height="4.2" fill="#6a3620" stroke="#ec8a48" stroke-width="1"/>
<line x1="627.5" y1="194.2" x2="627.5" y2="201.1" stroke="#ec8a48" stroke-width="1"/>
<rect x="626.5" y="197.3" width="2" height="2.0" fill="#6a3620" stroke="#ec8a48" stroke-width="1"/>
<line x1="631.5" y1="192.1" x2="631.5" y2="202.5" stroke="#ec8a48" stroke-width="1"/>
<rect x="630.5" y="195.9" width="2" height="2.0" fill="#6a3620" stroke="#ec8a48" stroke-width="1"/>
<line x1="635.5" y1="192.1" x2="635.5" y2="209.4" stroke="#ec8a48" stroke-width="1"/>
<rect x="634.5" y="196.9" width="2" height="8.3" fill="#6a3620" stroke="#ec8a48" stroke-width="1"/>
<line x1="639.5" y1="192.1" x2="639.5" y2="209.4" stroke="#ec8a48" stroke-width="1"/>
<rect x="638.5" y="198.3" width="2" height="4.9" fill="#f8a868" stroke="#ec8a48" stroke-width="1"/>
<line x1="644.5" y1="192.8" x2="644.5" y2="201.1" stroke="#ec8a48" stroke-width="1"/>
<rect x="643.5" y="194.6" width="2" height="2.0" fill="#6a3620" stroke="#ec8a48" stroke-width="1"/>
<line x1="648.5" y1="189.3" x2="648.5" y2="197.6" stroke="#ec8a48" stroke-width="1"/>
<rect x="647.5" y="192.5" width="2" height="2.0" fill="#6a3620" stroke="#ec8a48" stroke-width="1"/>
<line x1="652.5" y1="192.1" x2="652.5" y2="200.4" stroke="#ec8a48" stroke-width="1"/>
<rect x="651.5" y="194.2" width="2" height="4.2" fill="#6a3620" stroke="#ec8a48" stroke-width="1"/>
<line x1="656.5" y1="181.0" x2="656.5" y2="198.3" stroke="#ec8a48" stroke-width="1"/>
<rect x="655.5" y="185.8" width="2" height="10.4" fill="#f8a868" stroke="#ec8a48" stroke-width="1"/>
<line x1="660.5" y1="178.2" x2="660.5" y2="198.3" stroke="#ec8a48" stroke-width="1"/>
<rect x="659.5" y="184.4" width="2" height="12.5" fill="#6a3620" stroke="#ec8a48" stroke-width="1"/>
<line x1="664.5" y1="194.9" x2="664.5" y2="215.0" stroke="#ec8a48" stroke-width="1"/>
<rect x="663.5" y="195.6" width="2" height="9.0" fill="#6a3620" stroke="#ec8a48" stroke-width="1"/>
<line x1="668.5" y1="194.9" x2="668.5" y2="207.4" stroke="#ec8a48" stroke-width="1"/>
<rect x="667.5" y="196.2" width="2" height="6.9" fill="#f8a868" stroke="#ec8a48" stroke-width="1"/>
<line x1="672.5" y1="194.2" x2="672.5" y2="201.1" stroke="#ec8a48" stroke-width="1"/>
<rect x="671.5" y="195.2" width="2" height="2.0" fill="#6a3620" stroke="#ec8a48" stroke-width="1"/>
<line x1="676.5" y1="194.9" x2="676.5" y2="198.3" stroke="#ec8a48" stroke-width="1"/>
<rect x="675.5" y="195.7" width="2" height="2.0" fill="#6a3620" stroke="#ec8a48" stroke-width="1"/>
<line x1="680.5" y1="192.8" x2="680.5" y2="203.9" stroke="#ec8a48" stroke-width="1"/>
<rect x="679.5" y="196.9" width="2" height="5.6" fill="#6a3620" stroke="#ec8a48" stroke-width="1"/>
<line x1="685.5" y1="198.3" x2="685.5" y2="208.8" stroke="#ec8a48" stroke-width="1"/>
<rect x="684.5" y="201.5" width="2" height="2.0" fill="#6a3620" stroke="#ec8a48" stroke-width="1"/>
<line x1="689.5" y1="201.1" x2="689.5" y2="211.5" stroke="#ec8a48" stroke-width="1"/>
<rect x="688.5" y="203.2" width="2" height="4.9" fill="#6a3620" stroke="#ec8a48" stroke-width="1"/>
<line x1="693.5" y1="202.5" x2="693.5" y2="210.8" stroke="#ec8a48" stroke-width="1"/>
<rect x="692.5" y="206.4" width="2" height="2.0" fill="#6a3620" stroke="#ec8a48" stroke-width="1"/>
<line x1="697.5" y1="204.6" x2="697.5" y2="209.4" stroke="#ec8a48" stroke-width="1"/>
<rect x="696.5" y="206.4" width="2" height="2.0" fill="#6a3620" stroke="#ec8a48" stroke-width="1"/>
<line x1="701.5" y1="206.0" x2="701.5" y2="212.2" stroke="#ec8a48" stroke-width="1"/>
<rect x="700.5" y="207.4" width="2" height="4.2" fill="#6a3620" stroke="#ec8a48" stroke-width="1"/>
<line x1="705.5" y1="209.4" x2="705.5" y2="217.8" stroke="#ec8a48" stroke-width="1"/>
<rect x="704.5" y="210.8" width="2" height="5.6" fill="#6a3620" stroke="#ec8a48" stroke-width="1"/>
<line x1="709.5" y1="202.5" x2="709.5" y2="216.4" stroke="#ec8a48" stroke-width="1"/>
<rect x="708.5" y="209.4" width="2" height="5.6" fill="#f8a868" stroke="#ec8a48" stroke-width="1"/>
<line x1="713.5" y1="196.2" x2="713.5" y2="213.6" stroke="#ec8a48" stroke-width="1"/>
<rect x="712.5" y="200.4" width="2" height="6.9" fill="#f8a868" stroke="#ec8a48" stroke-width="1"/>
<line x1="717.5" y1="192.8" x2="717.5" y2="206.7" stroke="#ec8a48" stroke-width="1"/>
<rect x="716.5" y="200.8" width="2" height="2.0" fill="#6a3620" stroke="#ec8a48" stroke-width="1"/>
<line x1="721.5" y1="201.8" x2="721.5" y2="209.4" stroke="#ec8a48" stroke-width="1"/>
<rect x="720.5" y="204.3" width="2" height="2.0" fill="#6a3620" stroke="#ec8a48" stroke-width="1"/>
<line x1="726.5" y1="203.2" x2="726.5" y2="209.4" stroke="#ec8a48" stroke-width="1"/>
<rect x="725.5" y="204.6" width="2" height="4.2" fill="#6a3620" stroke="#ec8a48" stroke-width="1"/>
<line x1="730.5" y1="201.7" x2="730.5" y2="210.0" stroke="#ec8a48" stroke-width="1"/>
<rect x="729.5" y="204.4" width="2" height="3.5" fill="#f8a868" stroke="#ec8a48" stroke-width="1"/>
<line x1="734.5" y1="200.3" x2="734.5" y2="216.9" stroke="#ec8a48" stroke-width="1"/>
<rect x="733.5" y="202.4" width="2" height="11.8" fill="#6a3620" stroke="#ec8a48" stroke-width="1"/>
<line x1="738.5" y1="207.9" x2="738.5" y2="227.4" stroke="#ec8a48" stroke-width="1"/>
<rect x="737.5" y="212.5" width="2" height="2.0" fill="#6a3620" stroke="#ec8a48" stroke-width="1"/>
<line x1="742.5" y1="208.6" x2="742.5" y2="219.7" stroke="#ec8a48" stroke-width="1"/>
<rect x="741.5" y="212.8" width="2" height="5.6" fill="#6a3620" stroke="#ec8a48" stroke-width="1"/>
<line x1="746.5" y1="213.5" x2="746.5" y2="224.6" stroke="#ec8a48" stroke-width="1"/>
<rect x="745.5" y="216.9" width="2" height="6.2" fill="#6a3620" stroke="#ec8a48" stroke-width="1"/>
<line x1="750.5" y1="220.4" x2="750.5" y2="228.1" stroke="#ec8a48" stroke-width="1"/>
<rect x="749.5" y="222.2" width="2" height="2.0" fill="#6a3620" stroke="#ec8a48" stroke-width="1"/>
<line x1="754.5" y1="212.8" x2="754.5" y2="226.7" stroke="#ec8a48" stroke-width="1"/>
<rect x="753.5" y="216.9" width="2" height="4.9" fill="#f8a868" stroke="#ec8a48" stroke-width="1"/>
<line x1="758.5" y1="201.7" x2="758.5" y2="219.7" stroke="#ec8a48" stroke-width="1"/>
<rect x="757.5" y="205.8" width="2" height="9.7" fill="#f8a868" stroke="#ec8a48" stroke-width="1"/>
<line x1="762.5" y1="196.1" x2="762.5" y2="210.7" stroke="#ec8a48" stroke-width="1"/>
<rect x="761.5" y="201.0" width="2" height="2.1" fill="#6a3620" stroke="#ec8a48" stroke-width="1"/>
<line x1="767.5" y1="198.2" x2="767.5" y2="205.8" stroke="#ec8a48" stroke-width="1"/>
<rect x="766.5" y="200.3" width="2" height="4.9" fill="#6a3620" stroke="#ec8a48" stroke-width="1"/>
<line x1="771.5" y1="201.7" x2="771.5" y2="210.7" stroke="#ec8a48" stroke-width="1"/>
<rect x="770.5" y="204.8" width="2" height="2.0" fill="#6a3620" stroke="#ec8a48" stroke-width="1"/>
<line x1="775.5" y1="203.1" x2="775.5" y2="210.0" stroke="#ec8a48" stroke-width="1"/>
<rect x="774.5" y="205.5" width="2" height="2.0" fill="#6a3620" stroke="#ec8a48" stroke-width="1"/>
<line x1="779.5" y1="205.1" x2="779.5" y2="216.9" stroke="#ec8a48" stroke-width="1"/>
<rect x="778.5" y="207.9" width="2" height="7.6" fill="#6a3620" stroke="#ec8a48" stroke-width="1"/>
<line x1="783.5" y1="214.2" x2="783.5" y2="228.1" stroke="#ec8a48" stroke-width="1"/>
<rect x="782.5" y="215.6" width="2" height="8.3" fill="#6a3620" stroke="#ec8a48" stroke-width="1"/>
<line x1="787.5" y1="205.8" x2="787.5" y2="226.7" stroke="#ec8a48" stroke-width="1"/>
<rect x="786.5" y="215.6" width="2" height="5.6" fill="#f8a868" stroke="#ec8a48" stroke-width="1"/>
<line x1="791.5" y1="212.8" x2="791.5" y2="223.9" stroke="#ec8a48" stroke-width="1"/>
<rect x="790.5" y="215.6" width="2" height="4.2" fill="#6a3620" stroke="#ec8a48" stroke-width="1"/>
<line x1="795.5" y1="214.9" x2="795.5" y2="221.8" stroke="#ec8a48" stroke-width="1"/>
<rect x="794.5" y="216.9" width="2" height="4.2" fill="#6a3620" stroke="#ec8a48" stroke-width="1"/>
<line x1="799.5" y1="215.6" x2="799.5" y2="223.9" stroke="#ec8a48" stroke-width="1"/>
<rect x="798.5" y="217.3" width="2" height="2.0" fill="#6a3620" stroke="#ec8a48" stroke-width="1"/>
<line x1="803.5" y1="210.7" x2="803.5" y2="221.1" stroke="#ec8a48" stroke-width="1"/>
<rect x="802.5" y="216.2" width="2" height="2.8" fill="#6a3620" stroke="#ec8a48" stroke-width="1"/>
<line x1="808.5" y1="211.4" x2="808.5" y2="228.1" stroke="#ec8a48" stroke-width="1"/>
<rect x="807.5" y="214.9" width="2" height="3.5" fill="#f8a868" stroke="#ec8a48" stroke-width="1"/>
<line x1="812.5" y1="211.4" x2="812.5" y2="223.9" stroke="#ec8a48" stroke-width="1"/>
<rect x="811.5" y="212.8" width="2" height="9.7" fill="#6a3620" stroke="#ec8a48" stroke-width="1"/>
<line x1="816.5" y1="216.9" x2="816.5" y2="226.7" stroke="#ec8a48" stroke-width="1"/>
<rect x="815.5" y="222.5" width="2" height="2.8" fill="#6a3620" stroke="#ec8a48" stroke-width="1"/>
<line x1="820.5" y1="219.0" x2="820.5" y2="227.4" stroke="#ec8a48" stroke-width="1"/>
<rect x="819.5" y="222.9" width="2" height="2.0" fill="#6a3620" stroke="#ec8a48" stroke-width="1"/>
<line x1="824.5" y1="221.1" x2="824.5" y2="226.7" stroke="#ec8a48" stroke-width="1"/>
<rect x="823.5" y="223.2" width="2" height="2.1" fill="#6a3620" stroke="#ec8a48" stroke-width="1"/>
<line x1="828.5" y1="221.1" x2="828.5" y2="239.2" stroke="#ec8a48" stroke-width="1"/>
<rect x="827.5" y="223.9" width="2" height="14.6" fill="#6a3620" stroke="#ec8a48" stroke-width="1"/>
<line x1="832.5" y1="228.1" x2="832.5" y2="238.5" stroke="#ec8a48" stroke-width="1"/>
<rect x="831.5" y="232.2" width="2" height="5.6" fill="#f8a868" stroke="#ec8a48" stroke-width="1"/>
<line x1="836.5" y1="216.9" x2="836.5" y2="235.0" stroke="#ec8a48" stroke-width="1"/>
<rect x="835.5" y="221.1" width="2" height="11.1" fill="#f8a868" stroke="#ec8a48" stroke-width="1"/>
<line x1="840.5" y1="204.4" x2="840.5" y2="228.1" stroke="#ec8a48" stroke-width="1"/>
<rect x="839.5" y="221.1" width="2" height="2.1" fill="#6a3620" stroke="#ec8a48" stroke-width="1"/>
<line x1="844.5" y1="221.1" x2="844.5" y2="229.4" stroke="#ec8a48" stroke-width="1"/>
<rect x="843.5" y="222.5" width="2" height="2.8" fill="#6a3620" stroke="#ec8a48" stroke-width="1"/>
<line x1="849.5" y1="222.5" x2="849.5" y2="232.2" stroke="#ec8a48" stroke-width="1"/>
<rect x="848.5" y="223.9" width="2" height="6.2" fill="#6a3620" stroke="#ec8a48" stroke-width="1"/>
</g>
<g clip-path="url(#cmacd)">
<line x1="16.5" y1="281.7" x2="16.5" y2="279.2" stroke="#b82a2a" stroke-width="1.6"/>
<line x1="20.5" y1="281.7" x2="20.5" y2="279.2" stroke="#b82a2a" stroke-width="1.6"/>
<line x1="24.5" y1="281.7" x2="24.5" y2="279.2" stroke="#b82a2a" stroke-width="1.6"/>
<line x1="29.5" y1="281.7" x2="29.5" y2="279.2" stroke="#b82a2a" stroke-width="1.6"/>
<line x1="33.5" y1="281.7" x2="33.5" y2="279.2" stroke="#b82a2a" stroke-width="1.6"/>
<line x1="37.5" y1="281.7" x2="37.5" y2="279.2" stroke="#b82a2a" stroke-width="1.6"/>
<line x1="41.5" y1="281.7" x2="41.5" y2="279.2" stroke="#b82a2a" stroke-width="1.6"/>
<line x1="45.5" y1="281.7" x2="45.5" y2="279.2" stroke="#b82a2a" stroke-width="1.6"/>
<line x1="49.5" y1="281.7" x2="49.5" y2="279.2" stroke="#b82a2a" stroke-width="1.6"/>
<line x1="53.5" y1="281.7" x2="53.5" y2="279.2" stroke="#b82a2a" stroke-width="1.6"/>
<line x1="57.5" y1="281.7" x2="57.5" y2="279.2" stroke="#b82a2a" stroke-width="1.6"/>
<line x1="61.5" y1="281.7" x2="61.5" y2="279.2" stroke="#b82a2a" stroke-width="1.6"/>
<line x1="70.5" y1="281.7" x2="70.5" y2="285.3" stroke="#b82a2a" stroke-width="1.6"/>
<line x1="74.5" y1="281.7" x2="74.5" y2="286.3" stroke="#b82a2a" stroke-width="1.6"/>
<line x1="78.5" y1="281.7" x2="78.5" y2="287.3" stroke="#b82a2a" stroke-width="1.6"/>
<line x1="82.5" y1="281.7" x2="82.5" y2="288.3" stroke="#b82a2a" stroke-width="1.6"/>
<line x1="86.5" y1="281.7" x2="86.5" y2="288.9" stroke="#b82a2a" stroke-width="1.6"/>
<line x1="90.5" y1="281.7" x2="90.5" y2="289.5" stroke="#b82a2a" stroke-width="1.6"/>
<line x1="94.5" y1="281.7" x2="94.5" y2="290.0" stroke="#b82a2a" stroke-width="1.6"/>
<line x1="98.5" y1="281.7" x2="98.5" y2="290.6" stroke="#b82a2a" stroke-width="1.6"/>
<line x1="102.5" y1="281.7" x2="102.5" y2="291.1" stroke="#b82a2a" stroke-width="1.6"/>
<line x1="106.5" y1="281.7" x2="106.5" y2="291.2" stroke="#b82a2a" stroke-width="1.6"/>
<line x1="111.5" y1="281.7" x2="111.5" y2="291.4" stroke="#b82a2a" stroke-width="1.6"/>
<line x1="115.5" y1="281.7" x2="115.5" y2="291.6" stroke="#b82a2a" stroke-width="1.6"/>
<line x1="119.5" y1="281.7" x2="119.5" y2="292.1" stroke="#b82a2a" stroke-width="1.6"/>
<line x1="123.5" y1="281.7" x2="123.5" y2="292.5" stroke="#b82a2a" stroke-width="1.6"/>
<line x1="127.5" y1="281.7" x2="127.5" y2="293.0" stroke="#b82a2a" stroke-width="1.6"/>
<line x1="131.5" y1="281.7" x2="131.5" y2="293.4" stroke="#b82a2a" stroke-width="1.6"/>
<line x1="135.5" y1="281.7" x2="135.5" y2="293.4" stroke="#b82a2a" stroke-width="1.6"/>
<line x1="139.5" y1="281.7" x2="139.5" y2="293.0" stroke="#b82a2a" stroke-width="1.6"/>
<line x1="143.5" y1="281.7" x2="143.5" y2="292.7" stroke="#b82a2a" stroke-width="1.6"/>
<line x1="147.5" y1="281.7" x2="147.5" y2="292.0" stroke="#b82a2a" stroke-width="1.6"/>
<line x1="152.5" y1="281.7" x2="152.5" y2="290.8" stroke="#b82a2a" stroke-width="1.6"/>
<line x1="156.5" y1="281.7" x2="156.5" y2="289.8" stroke="#b82a2a" stroke-width="1.6"/>
<line x1="160.5" y1="281.7" x2="160.5" y2="288.8" stroke="#b82a2a" stroke-width="1.6"/>
<line x1="164.5" y1="281.7" x2="164.5" y2="287.8" stroke="#b82a2a" stroke-width="1.6"/>
<line x1="168.5" y1="281.7" x2="168.5" y2="284.2" stroke="#b82a2a" stroke-width="1.6"/>
<line x1="172.5" y1="281.7" x2="172.5" y2="274.8" stroke="#b82a2a" stroke-width="1.6"/>
<line x1="176.5" y1="281.7" x2="176.5" y2="272.8" stroke="#b82a2a" stroke-width="1.6"/>
<line x1="180.5" y1="281.7" x2="180.5" y2="270.8" stroke="#b82a2a" stroke-width="1.6"/>
<line x1="184.5" y1="281.7" x2="184.5" y2="269.3" stroke="#b82a2a" stroke-width="1.6"/>
<line x1="188.5" y1="281.7" x2="188.5" y2="268.5" stroke="#b82a2a" stroke-width="1.6"/>
<line x1="193.5" y1="281.7" x2="193.5" y2="267.6" stroke="#b82a2a" stroke-width="1.6"/>
<line x1="197.5" y1="281.7" x2="197.5" y2="268.6" stroke="#b82a2a" stroke-width="1.6"/>
<line x1="201.5" y1="281.7" x2="201.5" y2="269.6" stroke="#b82a2a" stroke-width="1.6"/>
<line x1="205.5" y1="281.7" x2="205.5" y2="270.6" stroke="#b82a2a" stroke-width="1.6"/>
<line x1="209.5" y1="281.7" x2="209.5" y2="271.6" stroke="#b82a2a" stroke-width="1.6"/>
<line x1="213.5" y1="281.7" x2="213.5" y2="272.6" stroke="#b82a2a" stroke-width="1.6"/>
<line x1="217.5" y1="281.7" x2="217.5" y2="273.6" stroke="#b82a2a" stroke-width="1.6"/>
<line x1="221.5" y1="281.7" x2="221.5" y2="274.3" stroke="#b82a2a" stroke-width="1.6"/>
<line x1="225.5" y1="281.7" x2="225.5" y2="275.0" stroke="#b82a2a" stroke-width="1.6"/>
<line x1="229.5" y1="281.7" x2="229.5" y2="275.7" stroke="#b82a2a" stroke-width="1.6"/>
<line x1="234.5" y1="281.7" x2="234.5" y2="277.7" stroke="#b82a2a" stroke-width="1.6"/>
<line x1="238.5" y1="281.7" x2="238.5" y2="279.2" stroke="#b82a2a" stroke-width="1.6"/>
<line x1="250.5" y1="281.7" x2="250.5" y2="284.2" stroke="#b82a2a" stroke-width="1.6"/>
<line x1="254.5" y1="281.7" x2="254.5" y2="284.9" stroke="#b82a2a" stroke-width="1.6"/>
<line x1="258.5" y1="281.7" x2="258.5" y2="286.2" stroke="#b82a2a" stroke-width="1.6"/>
<line x1="262.5" y1="281.7" x2="262.5" y2="287.0" stroke="#b82a2a" stroke-width="1.6"/>
<line x1="266.5" y1="281.7" x2="266.5" y2="287.3" stroke="#b82a2a" stroke-width="1.6"/>
<line x1="270.5" y1="281.7" x2="270.5" y2="287.6" stroke="#b82a2a" stroke-width="1.6"/>
<line x1="275.5" y1="281.7" x2="275.5" y2="287.9" stroke="#b82a2a" stroke-width="1.6"/>
<line x1="279.5" y1="281.7" x2="279.5" y2="288.2" stroke="#b82a2a" stroke-width="1.6"/>
<line x1="283.5" y1="281.7" x2="283.5" y2="288.8" stroke="#b82a2a" stroke-width="1.6"/>
<line x1="287.5" y1="281.7" x2="287.5" y2="289.0" stroke="#b82a2a" stroke-width="1.6"/>
<line x1="291.5" y1="281.7" x2="291.5" y2="288.0" stroke="#b82a2a" stroke-width="1.6"/>
<line x1="295.5" y1="281.7" x2="295.5" y2="287.0" stroke="#b82a2a" stroke-width="1.6"/>
<line x1="299.5" y1="281.7" x2="299.5" y2="286.0" stroke="#b82a2a" stroke-width="1.6"/>
<line x1="303.5" y1="281.7" x2="303.5" y2="285.0" stroke="#b82a2a" stroke-width="1.6"/>
<line x1="307.5" y1="281.7" x2="307.5" y2="284.2" stroke="#b82a2a" stroke-width="1.6"/>
<line x1="311.5" y1="281.7" x2="311.5" y2="284.2" stroke="#b82a2a" stroke-width="1.6"/>
<line x1="389.5" y1="281.7" x2="389.5" y2="284.2" stroke="#b82a2a" stroke-width="1.6"/>
<line x1="393.5" y1="281.7" x2="393.5" y2="284.2" stroke="#b82a2a" stroke-width="1.6"/>
<line x1="398.5" y1="281.7" x2="398.5" y2="284.2" stroke="#b82a2a" stroke-width="1.6"/>
<line x1="402.5" y1="281.7" x2="402.5" y2="284.2" stroke="#b82a2a" stroke-width="1.6"/>
<line x1="406.5" y1="281.7" x2="406.5" y2="284.2" stroke="#b82a2a" stroke-width="1.6"/>
<line x1="410.5" y1="281.7" x2="410.5" y2="284.2" stroke="#b82a2a" stroke-width="1.6"/>
<line x1="414.5" y1="281.7" x2="414.5" y2="284.2" stroke="#b82a2a" stroke-width="1.6"/>
<line x1="418.5" y1="281.7" x2="418.5" y2="284.2" stroke="#b82a2a" stroke-width="1.6"/>
<line x1="422.5" y1="281.7" x2="422.5" y2="284.2" stroke="#b82a2a" stroke-width="1.6"/>
<line x1="426.5" y1="281.7" x2="426.5" y2="284.2" stroke="#b82a2a" stroke-width="1.6"/>
<line x1="430.5" y1="281.7" x2="430.5" y2="284.2" stroke="#b82a2a" stroke-width="1.6"/>
<line x1="434.5" y1="281.7" x2="434.5" y2="284.2" stroke="#b82a2a" stroke-width="1.6"/>
<line x1="439.5" y1="281.7" x2="439.5" y2="284.2" stroke="#b82a2a" stroke-width="1.6"/>
<line x1="443.5" y1="281.7" x2="443.5" y2="284.2" stroke="#b82a2a" stroke-width="1.6"/>
<line x1="447.5" y1="281.7" x2="447.5" y2="284.2" stroke="#b82a2a" stroke-width="1.6"/>
<line x1="451.5" y1="281.7" x2="451.5" y2="284.2" stroke="#b82a2a" stroke-width="1.6"/>
<line x1="455.5" y1="281.7" x2="455.5" y2="284.2" stroke="#b82a2a" stroke-width="1.6"/>
<line x1="459.5" y1="281.7" x2="459.5" y2="284.2" stroke="#b82a2a" stroke-width="1.6"/>
<line x1="463.5" y1="281.7" x2="463.5" y2="284.2" stroke="#b82a2a" stroke-width="1.6"/>
<line x1="467.5" y1="281.7" x2="467.5" y2="284.2" stroke="#b82a2a" stroke-width="1.6"/>
<line x1="471.5" y1="281.7" x2="471.5" y2="284.2" stroke="#b82a2a" stroke-width="1.6"/>
<line x1="475.5" y1="281.7" x2="475.5" y2="284.2" stroke="#b82a2a" stroke-width="1.6"/>
<line x1="480.5" y1="281.7" x2="480.5" y2="284.2" stroke="#b82a2a" stroke-width="1.6"/>
<line x1="484.5" y1="281.7" x2="484.5" y2="284.2" stroke="#b82a2a" stroke-width="1.6"/>
<line x1="488.5" y1="281.7" x2="488.5" y2="284.2" stroke="#b82a2a" stroke-width="1.6"/>
<line x1="492.5" y1="281.7" x2="492.5" y2="284.2" stroke="#b82a2a" stroke-width="1.6"/>
<line x1="496.5" y1="281.7" x2="496.5" y2="284.2" stroke="#b82a2a" stroke-width="1.6"/>
<line x1="500.5" y1="281.7" x2="500.5" y2="284.2" stroke="#b82a2a" stroke-width="1.6"/>
<line x1="504.5" y1="281.7" x2="504.5" y2="284.3" stroke="#b82a2a" stroke-width="1.6"/>
<line x1="508.5" y1="281.7" x2="508.5" y2="284.3" stroke="#b82a2a" stroke-width="1.6"/>
<line x1="512.5" y1="281.7" x2="512.5" y2="284.4" stroke="#b82a2a" stroke-width="1.6"/>
<line x1="516.5" y1="281.7" x2="516.5" y2="284.4" stroke="#b82a2a" stroke-width="1.6"/>
<line x1="521.5" y1="281.7" x2="521.5" y2="284.5" stroke="#b82a2a" stroke-width="1.6"/>
<line x1="525.5" y1="281.7" x2="525.5" y2="284.6" stroke="#b82a2a" stroke-width="1.6"/>
<line x1="529.5" y1="281.7" x2="529.5" y2="284.6" stroke="#b82a2a" stroke-width="1.6"/>
<line x1="533.5" y1="281.7" x2="533.5" y2="284.7" stroke="#b82a2a" stroke-width="1.6"/>
<line x1="537.5" y1="281.7" x2="537.5" y2="284.7" stroke="#b82a2a" stroke-width="1.6"/>
<line x1="541.5" y1="281.7" x2="541.5" y2="284.8" stroke="#b82a2a" stroke-width="1.6"/>
<line x1="545.5" y1="281.7" x2="545.5" y2="284.2" stroke="#b82a2a" stroke-width="1.6"/>
<line x1="549.5" y1="281.7" x2="549.5" y2="279.0" stroke="#b82a2a" stroke-width="1.6"/>
<line x1="553.5" y1="281.7" x2="553.5" y2="279.0" stroke="#b82a2a" stroke-width="1.6"/>
<line x1="557.5" y1="281.7" x2="557.5" y2="279.0" stroke="#b82a2a" stroke-width="1.6"/>
<line x1="566.5" y1="281.7" x2="566.5" y2="284.2" stroke="#b82a2a" stroke-width="1.6"/>
<line x1="570.5" y1="281.7" x2="570.5" y2="284.7" stroke="#b82a2a" stroke-width="1.6"/>
<line x1="574.5" y1="281.7" x2="574.5" y2="285.5" stroke="#b82a2a" stroke-width="1.6"/>
<line x1="578.5" y1="281.7" x2="578.5" y2="285.9" stroke="#b82a2a" stroke-width="1.6"/>
<line x1="582.5" y1="281.7" x2="582.5" y2="286.4" stroke="#b82a2a" stroke-width="1.6"/>
<line x1="586.5" y1="281.7" x2="586.5" y2="286.8" stroke="#b82a2a" stroke-width="1.6"/>
<line x1="590.5" y1="281.7" x2="590.5" y2="287.2" stroke="#b82a2a" stroke-width="1.6"/>
<line x1="594.5" y1="281.7" x2="594.5" y2="287.6" stroke="#b82a2a" stroke-width="1.6"/>
<line x1="598.5" y1="281.7" x2="598.5" y2="288.1" stroke="#b82a2a" stroke-width="1.6"/>
<line x1="603.5" y1="281.7" x2="603.5" y2="288.6" stroke="#b82a2a" stroke-width="1.6"/>
<line x1="607.5" y1="281.7" x2="607.5" y2="288.6" stroke="#b82a2a" stroke-width="1.6"/>
<line x1="611.5" y1="281.7" x2="611.5" y2="288.1" stroke="#b82a2a" stroke-width="1.6"/>
<line x1="615.5" y1="281.7" x2="615.5" y2="287.6" stroke="#b82a2a" stroke-width="1.6"/>
<line x1="619.5" y1="281.7" x2="619.5" y2="287.2" stroke="#b82a2a" stroke-width="1.6"/>
<line x1="623.5" y1="281.7" x2="623.5" y2="286.7" stroke="#b82a2a" stroke-width="1.6"/>
<line x1="627.5" y1="281.7" x2="627.5" y2="286.3" stroke="#b82a2a" stroke-width="1.6"/>
<line x1="631.5" y1="281.7" x2="631.5" y2="285.8" stroke="#b82a2a" stroke-width="1.6"/>
<line x1="635.5" y1="281.7" x2="635.5" y2="285.4" stroke="#b82a2a" stroke-width="1.6"/>
<line x1="639.5" y1="281.7" x2="639.5" y2="284.2" stroke="#b82a2a" stroke-width="1.6"/>
<line x1="648.5" y1="281.7" x2="648.5" y2="279.2" stroke="#b82a2a" stroke-width="1.6"/>
<line x1="652.5" y1="281.7" x2="652.5" y2="279.2" stroke="#b82a2a" stroke-width="1.6"/>
<line x1="656.5" y1="281.7" x2="656.5" y2="279.2" stroke="#b82a2a" stroke-width="1.6"/>
<line x1="660.5" y1="281.7" x2="660.5" y2="279.2" stroke="#b82a2a" stroke-width="1.6"/>
<line x1="664.5" y1="281.7" x2="664.5" y2="279.2" stroke="#b82a2a" stroke-width="1.6"/>
<line x1="668.5" y1="281.7" x2="668.5" y2="279.2" stroke="#b82a2a" stroke-width="1.6"/>
<line x1="672.5" y1="281.7" x2="672.5" y2="279.2" stroke="#b82a2a" stroke-width="1.6"/>
<line x1="676.5" y1="281.7" x2="676.5" y2="279.2" stroke="#b82a2a" stroke-width="1.6"/>
<line x1="680.5" y1="281.7" x2="680.5" y2="279.2" stroke="#b82a2a" stroke-width="1.6"/>
<line x1="685.5" y1="281.7" x2="685.5" y2="279.2" stroke="#b82a2a" stroke-width="1.6"/>
<line x1="689.5" y1="281.7" x2="689.5" y2="279.2" stroke="#b82a2a" stroke-width="1.6"/>
<line x1="693.5" y1="281.7" x2="693.5" y2="279.2" stroke="#b82a2a" stroke-width="1.6"/>
<line x1="697.5" y1="281.7" x2="697.5" y2="279.2" stroke="#b82a2a" stroke-width="1.6"/>
<line x1="701.5" y1="281.7" x2="701.5" y2="279.2" stroke="#b82a2a" stroke-width="1.6"/>
<line x1="705.5" y1="281.7" x2="705.5" y2="279.2" stroke="#b82a2a" stroke-width="1.6"/>
<line x1="709.5" y1="281.7" x2="709.5" y2="279.2" stroke="#b82a2a" stroke-width="1.6"/>
<line x1="713.5" y1="281.7" x2="713.5" y2="279.2" stroke="#b82a2a" stroke-width="1.6"/>
<line x1="717.5" y1="281.7" x2="717.5" y2="279.2" stroke="#b82a2a" stroke-width="1.6"/>
<line x1="721.5" y1="281.7" x2="721.5" y2="279.2" stroke="#b82a2a" stroke-width="1.6"/>
<line x1="726.5" y1="281.7" x2="726.5" y2="279.2" stroke="#b82a2a" stroke-width="1.6"/>
<line x1="730.5" y1="281.7" x2="730.5" y2="279.2" stroke="#b82a2a" stroke-width="1.6"/>
<line x1="734.5" y1="281.7" x2="734.5" y2="279.2" stroke="#b82a2a" stroke-width="1.6"/>
<line x1="738.5" y1="281.7" x2="738.5" y2="279.2" stroke="#b82a2a" stroke-width="1.6"/>
<line x1="742.5" y1="281.7" x2="742.5" y2="279.2" stroke="#b82a2a" stroke-width="1.6"/>
<line x1="758.5" y1="281.7" x2="758.5" y2="279.2" stroke="#b82a2a" stroke-width="1.6"/>
<line x1="762.5" y1="281.7" x2="762.5" y2="278.6" stroke="#b82a2a" stroke-width="1.6"/>
<line x1="767.5" y1="281.7" x2="767.5" y2="278.6" stroke="#b82a2a" stroke-width="1.6"/>
<line x1="771.5" y1="281.7" x2="771.5" y2="278.6" stroke="#b82a2a" stroke-width="1.6"/>
<line x1="775.5" y1="281.7" x2="775.5" y2="278.6" stroke="#b82a2a" stroke-width="1.6"/>
<line x1="779.5" y1="281.7" x2="779.5" y2="278.6" stroke="#b82a2a" stroke-width="1.6"/>
<path d="M47.5,258.6 C49.2,258.4 54.8,257.5 57.9,257.8 C61.0,258.0 63.8,258.8 66.2,260.2 C68.7,261.7 70.1,264.2 72.5,266.5 C74.9,268.8 78.1,272.1 80.8,273.8 C83.6,275.5 86.4,275.5 89.2,276.9 C91.9,278.3 94.4,280.0 97.5,282.1 C100.6,284.2 104.1,287.0 107.9,289.4 C111.7,291.8 115.9,294.3 120.4,296.7 C124.9,299.1 130.8,301.6 135.0,304.0 C139.2,306.4 141.9,309.4 145.4,311.3 C148.9,313.2 152.7,314.8 155.8,315.5 C159.0,316.2 161.4,317.0 164.2,315.5 C166.9,313.9 169.7,310.4 172.5,306.1 C175.3,301.7 177.7,294.3 180.8,289.4 C184.0,284.6 187.4,280.2 191.2,276.9 C195.1,273.6 199.2,271.7 203.8,269.6 C208.3,267.5 214.9,265.8 218.3,264.4 C221.8,263.0 222.2,261.8 224.6,261.3 C227.0,260.8 230.5,260.9 232.9,261.3 C235.3,261.6 235.9,262.3 239.2,263.4 C242.4,264.4 248.2,266.3 252.5,267.5 C256.8,268.8 260.8,269.5 265.0,270.7 C269.2,271.9 273.7,273.1 277.5,274.8 C281.3,276.6 283.8,279.7 287.9,281.1 C292.1,282.5 298.3,282.3 302.5,283.2 C306.7,284.0 308.8,285.4 312.9,286.3 C317.1,287.2 320.9,288.0 327.5,288.4 C334.1,288.7 346.2,288.9 352.5,288.4 C358.8,287.9 360.1,285.8 365.0,285.2 C369.9,284.7 375.4,285.1 381.7,285.2 C387.9,285.4 396.6,286.3 402.5,286.3 C408.4,286.3 412.9,285.8 417.1,285.2 C421.3,284.7 423.7,283.9 427.5,283.2 C431.3,282.5 436.5,281.3 440.0,281.1 C443.5,280.9 444.2,281.8 448.3,282.1 C452.5,282.5 460.8,282.3 465.0,283.2 C469.2,284.0 470.4,286.1 473.3,287.3 C476.3,288.5 477.8,289.4 482.5,290.5 C487.2,291.5 494.7,292.7 501.2,293.6 C507.8,294.5 516.2,294.8 522.1,295.7 C528.0,296.5 532.2,299.5 536.7,298.8 C541.2,298.1 545.7,293.2 549.2,291.5 C552.6,289.8 554.7,288.5 557.5,288.4 C560.3,288.2 563.1,289.1 565.8,290.5 C568.6,291.8 570.7,294.8 574.2,296.7 C577.6,298.6 582.5,300.0 586.7,301.9 C590.8,303.8 594.3,305.7 599.2,308.2 C604.0,310.6 611.0,314.8 615.8,316.5 C620.7,318.2 624.2,318.6 628.3,318.6 C632.5,318.6 637.0,317.7 640.8,316.5 C644.7,315.3 647.8,313.0 651.2,311.3 C654.7,309.6 657.8,307.5 661.7,306.1 C665.5,304.7 669.7,303.7 674.2,303.0 C678.7,302.3 685.0,302.0 688.8,301.9 C692.5,301.8 692.9,302.7 696.7,302.3 C700.4,302.0 707.1,300.8 711.2,299.8 C715.4,298.9 716.5,297.5 721.7,296.7 C726.9,295.9 736.2,295.8 742.5,295.2 C748.8,294.7 754.3,294.7 759.2,293.6 C764.0,292.4 767.5,289.1 771.7,288.4 C775.8,287.7 778.6,289.2 784.2,289.4 C789.7,289.6 798.1,289.2 805.0,289.4 C811.9,289.6 821.0,289.8 825.8,290.5 C830.7,291.2 830.7,293.4 834.2,293.6 C837.6,293.8 844.2,291.7 846.7,291.5 C849.1,291.3 848.4,292.4 848.8,292.5" fill="none" stroke="#22862a" stroke-width="1.2" stroke-linejoin="round"/>
<path d="M46.5,263.4 C48.0,263.0 52.5,261.6 55.8,261.3 C59.1,260.9 61.7,260.2 66.2,261.3 C70.8,262.3 76.7,264.8 82.9,267.5 C89.2,270.3 97.5,274.7 103.8,278.0 C110.0,281.3 115.2,284.4 120.4,287.3 C125.6,290.3 129.1,292.4 135.0,295.7 C140.9,299.0 150.3,304.5 155.8,307.1 C161.4,309.7 164.9,311.5 168.3,311.3 C171.8,311.1 173.5,308.3 176.7,306.1 C179.8,303.8 182.9,301.2 187.1,297.8 C191.2,294.3 196.5,289.1 201.7,285.2 C206.9,281.4 213.5,278.0 218.3,274.8 C223.2,271.7 227.4,268.2 230.8,266.5 C234.3,264.8 234.2,264.2 239.2,264.4 C244.2,264.6 253.7,266.2 260.8,267.5 C267.9,268.9 276.1,271.0 281.7,272.8 C287.2,274.5 290.0,276.6 294.2,278.0 C298.3,279.3 300.4,279.7 306.7,281.1 C312.9,282.5 323.3,285.2 331.7,286.3 C340.0,287.3 349.7,287.6 356.7,287.3 C363.6,287.1 368.5,285.0 373.3,284.8 C378.2,284.7 381.7,286.0 385.8,286.3 C390.0,286.5 394.9,286.5 398.3,286.3 C401.8,286.1 403.5,285.2 406.7,285.2 C409.8,285.2 414.3,286.4 417.1,286.3 C419.9,286.2 419.9,285.4 423.3,284.8 C426.8,284.3 433.8,283.5 437.9,283.2 C442.1,282.8 443.8,282.8 448.3,282.8 C452.8,282.8 457.9,282.2 465.0,283.2 C472.1,284.1 483.1,286.8 490.8,288.4 C498.6,289.9 503.7,291.2 511.7,292.5 C519.7,293.9 531.8,296.7 538.8,296.7 C545.7,296.7 549.2,293.2 553.3,292.5 C557.5,291.8 560.3,292.2 563.8,292.5 C567.2,292.9 569.0,293.2 574.2,294.6 C579.4,296.0 588.1,298.4 595.0,300.9 C601.9,303.3 609.6,307.0 615.8,309.2 C622.1,311.5 627.3,313.5 632.5,314.4 C637.7,315.4 642.2,315.4 647.1,314.8 C651.9,314.3 656.5,312.4 661.7,311.3 C666.9,310.2 672.5,309.4 678.3,308.2 C684.2,307.0 691.2,305.0 696.7,304.0 C702.2,303.0 706.4,303.2 711.2,302.3 C716.1,301.5 720.6,299.7 725.8,298.8 C731.0,297.9 736.9,297.1 742.5,296.7 C748.1,296.4 754.7,297.2 759.2,296.7 C763.7,296.2 765.4,294.5 769.6,293.6 C773.8,292.6 778.3,291.5 784.2,291.1 C790.1,290.7 798.1,291.1 805.0,291.1 C811.9,291.1 821.0,290.8 825.8,291.1 C830.7,291.3 830.3,292.3 834.2,292.5 C838.0,292.8 846.3,292.5 848.8,292.5" fill="none" stroke="#c82c2c" stroke-width="1.35" stroke-linejoin="round"/>
</g>
<rect x="15" y="257" width="31" height="11.5" fill="#3a3f47"/>
<text x="16" y="268" font-family="Liberation Sans" font-size="11" fill="#2a7a2a" textLength="28" lengthAdjust="spacingAndGlyphs">MACD</text>
<g clip-path="url(#crsi)">
<line x1="14" y1="332.8" x2="850" y2="332.8" stroke="#1c1ca8" stroke-width="2"/>
<line x1="14" y1="386.5" x2="850" y2="386.5" stroke="#1c1ca8" stroke-width="2"/>
<path d="M32.5,338.6 L41.2,336.1 L49.6,330.7 L54.8,334.4 L62.1,337.5 L67.3,351.1 L74.6,368.8 L78.8,367.8 L87.1,356.3 L91.2,358.4 L95.4,375.0 L101.7,371.9 L103.8,366.7 L110.0,369.8 L114.2,373.0 L119.4,385.5 L123.5,381.3 L128.8,385.5 L132.9,382.3 L137.1,386.5 L145.4,391.7 L148.5,393.8 L153.8,388.6 L160.0,388.6 L164.2,385.5 L168.3,363.6 L173.5,342.8 L178.8,341.7 L185.0,346.9 L193.3,339.6 L197.5,345.9 L201.7,343.8 L207.9,344.8 L212.1,340.7 L218.3,340.7 L222.5,337.5 L226.7,342.8 L235.0,344.8 L240.0,348.6 L242.5,349.0 L246.2,357.3 L250.4,351.1 L254.6,355.2 L258.8,353.2 L265.0,353.2 L271.2,361.5 L275.4,358.4 L279.6,364.6 L283.8,366.7 L287.5,375.7 L291.0,357.3 L295.2,362.5 L302.5,362.5 L308.8,361.9 L312.9,371.5 L317.1,370.9 L321.2,367.8 L327.5,364.6 L332.7,368.4 L336.9,365.2 L342.1,365.2 L345.2,373.6 L349.4,361.5 L353.5,358.4 L357.7,364.0 L361.9,353.2 L370.2,360.5 L373.3,366.3 L377.5,366.7 L381.7,369.4 L385.8,366.7 L395.2,358.4 L402.5,365.2 L406.7,365.2 L410.8,363.6 L415.0,377.8 L418.8,350.7 L427.5,355.2 L434.8,364.0 L439.6,352.8 L448.3,361.1 L450.4,362.5 L454.6,362.5 L459.2,357.3 L462.9,359.4 L469.2,369.8 L474.2,374.4 L479.4,376.1 L487.7,367.3 L492.9,376.1 L499.2,376.5 L504.4,379.2 L512.7,366.7 L517.9,377.1 L524.2,380.2 L528.3,380.7 L532.5,385.5 L536.7,373.0 L541.9,364.6 L545.4,353.6 L553.3,358.4 L558.5,363.6 L561.7,364.6 L565.8,378.2 L574.2,384.4 L582.5,375.0 L590.8,386.5 L603.3,390.7 L609.6,395.9 L614.8,398.0 L620.0,394.8 L624.2,395.9 L628.3,392.8 L632.5,392.8 L635.6,397.3 L640.8,385.5 L645.0,382.3 L651.2,383.4 L656.0,369.4 L664.8,382.3 L669.0,373.0 L676.2,373.0 L680.0,376.5 L685.2,377.1 L689.4,381.3 L694.6,378.2 L698.8,379.8 L705.0,384.4 L713.3,366.3 L719.6,369.4 L725.8,373.0 L730.0,366.7 L734.2,375.0 L739.4,375.0 L746.7,382.8 L750.8,382.8 L758.1,361.5 L762.3,355.2 L767.5,361.5 L774.8,361.5 L783.1,375.0 L787.3,367.8 L794.6,373.0 L798.8,367.8 L802.9,369.4 L808.1,361.5 L812.3,371.5 L816.5,374.0 L821.7,370.2 L824.8,372.3 L828.3,383.4 L836.2,363.2 L842.5,365.7 L848.8,369.4" fill="none" stroke="#f08c30" stroke-width="1.1" stroke-linejoin="round"/>
<path d="M113.0,372.1 L114.2,373.0 L119.4,385.5 L120.5,384.3" fill="none" stroke="#30d030" stroke-width="1.2" stroke-linejoin="round"/>
<path d="M136.0,385.4 L137.1,386.5 L145.4,391.7 L148.5,393.8 L153.8,388.6 L160.0,388.6 L163.5,386.0" fill="none" stroke="#30d030" stroke-width="1.2" stroke-linejoin="round"/>
<path d="M528.0,380.6 L528.3,380.7 L532.5,385.5 L535.0,378.0" fill="none" stroke="#30d030" stroke-width="1.2" stroke-linejoin="round"/>
<path d="M607.0,393.7 L609.6,395.9 L614.8,398.0 L620.0,394.8 L624.2,395.9 L628.3,392.8 L632.5,392.8 L635.6,397.3 L640.8,385.5 L641.5,385.0" fill="none" stroke="#30d030" stroke-width="1.2" stroke-linejoin="round"/>
<path d="M47.6,332.0 L49.6,330.7 L52.8,333.0" fill="none" stroke="#a040e0" stroke-width="1.2" stroke-linejoin="round"/>
</g>
<rect x="15" y="328" width="17" height="11.5" fill="#3e3c3c"/>
<text x="16.5" y="339" font-family="Liberation Sans" font-size="11.5" fill="#e0a070" textLength="14.5" lengthAdjust="spacingAndGlyphs">RSI</text>
<path d="M18.5,341.5 L22,346 L25.5,341.5" fill="none" stroke="#f08c30" stroke-width="1.1"/>
<rect x="14.5" y="39.5" width="883" height="211.0" fill="none" stroke="#b4c4d6" stroke-width="1"/>
<rect x="14.5" y="256.5" width="883" height="65.0" fill="none" stroke="#b4c4d6" stroke-width="1"/>
<rect x="14.5" y="327.5" width="883" height="74.0" fill="none" stroke="#b4c4d6" stroke-width="1"/>
<line x1="897" y1="54.5" x2="901" y2="54.5" stroke="#b4c4d6" stroke-width="1"/>
<line x1="897" y1="103.5" x2="901" y2="103.5" stroke="#b4c4d6" stroke-width="1"/>
<line x1="897" y1="153.5" x2="901" y2="153.5" stroke="#b4c4d6" stroke-width="1"/>
<line x1="897" y1="202.5" x2="901" y2="202.5" stroke="#b4c4d6" stroke-width="1"/>
<line x1="897" y1="282.5" x2="901" y2="282.5" stroke="#b4c4d6" stroke-width="1"/>
<line x1="897" y1="345.5" x2="901" y2="345.5" stroke="#b4c4d6" stroke-width="1"/>
<line x1="897" y1="372.5" x2="901" y2="372.5" stroke="#b4c4d6" stroke-width="1"/>
<line x1="33.5" y1="399" x2="33.5" y2="405" stroke="#b4c4d6" stroke-width="1"/>
<line x1="58.5" y1="399" x2="58.5" y2="405" stroke="#b4c4d6" stroke-width="1"/>
<line x1="82.5" y1="399" x2="82.5" y2="405" stroke="#b4c4d6" stroke-width="1"/>
<line x1="107.5" y1="399" x2="107.5" y2="405" stroke="#b4c4d6" stroke-width="1"/>
<line x1="132.5" y1="399" x2="132.5" y2="405" stroke="#b4c4d6" stroke-width="1"/>
<line x1="156.5" y1="399" x2="156.5" y2="405" stroke="#b4c4d6" stroke-width="1"/>
<line x1="181.5" y1="399" x2="181.5" y2="405" stroke="#b4c4d6" stroke-width="1"/>
<line x1="205.5" y1="399" x2="205.5" y2="405" stroke="#b4c4d6" stroke-width="1"/>
<line x1="230.5" y1="399" x2="230.5" y2="405" stroke="#b4c4d6" stroke-width="1"/>
<line x1="254.5" y1="399" x2="254.5" y2="405" stroke="#b4c4d6" stroke-width="1"/>
<line x1="279.5" y1="399" x2="279.5" y2="405" stroke="#b4c4d6" stroke-width="1"/>
<line x1="304.5" y1="399" x2="304.5" y2="405" stroke="#b4c4d6" stroke-width="1"/>
<line x1="328.5" y1="399" x2="328.5" y2="405" stroke="#b4c4d6" stroke-width="1"/>
<line x1="353.5" y1="399" x2="353.5" y2="405" stroke="#b4c4d6" stroke-width="1"/>
<line x1="377.5" y1="399" x2="377.5" y2="405" stroke="#b4c4d6" stroke-width="1"/>
<line x1="402.5" y1="399" x2="402.5" y2="405" stroke="#b4c4d6" stroke-width="1"/>
<line x1="427.5" y1="399" x2="427.5" y2="405" stroke="#b4c4d6" stroke-width="1"/>
<line x1="451.5" y1="399" x2="451.5" y2="405" stroke="#b4c4d6" stroke-width="1"/>
<line x1="476.5" y1="399" x2="476.5" y2="405" stroke="#b4c4d6" stroke-width="1"/>
<line x1="500.5" y1="399" x2="500.5" y2="405" stroke="#b4c4d6" stroke-width="1"/>
<line x1="525.5" y1="399" x2="525.5" y2="405" stroke="#b4c4d6" stroke-width="1"/>
<line x1="549.5" y1="399" x2="549.5" y2="405" stroke="#b4c4d6" stroke-width="1"/>
<line x1="574.5" y1="399" x2="574.5" y2="405" stroke="#b4c4d6" stroke-width="1"/>
<line x1="599.5" y1="399" x2="599.5" y2="405" stroke="#b4c4d6" stroke-width="1"/>
<line x1="623.5" y1="399" x2="623.5" y2="405" stroke="#b4c4d6" stroke-width="1"/>
<line x1="648.5" y1="399" x2="648.5" y2="405" stroke="#b4c4d6" stroke-width="1"/>
<line x1="672.5" y1="399" x2="672.5" y2="405" stroke="#b4c4d6" stroke-width="1"/>
<line x1="697.5" y1="399" x2="697.5" y2="405" stroke="#b4c4d6" stroke-width="1"/>
<line x1="722.5" y1="399" x2="722.5" y2="405" stroke="#b4c4d6" stroke-width="1"/>
<line x1="746.5" y1="399" x2="746.5" y2="405" stroke="#b4c4d6" stroke-width="1"/>
<line x1="771.5" y1="399" x2="771.5" y2="405" stroke="#b4c4d6" stroke-width="1"/>
<line x1="795.5" y1="399" x2="795.5" y2="405" stroke="#b4c4d6" stroke-width="1"/>
<line x1="820.5" y1="399" x2="820.5" y2="405" stroke="#b4c4d6" stroke-width="1"/>
<line x1="844.5" y1="399" x2="844.5" y2="405" stroke="#b4c4d6" stroke-width="1"/>
<line x1="869.5" y1="399" x2="869.5" y2="405" stroke="#b4c4d6" stroke-width="1"/>
<line x1="894.5" y1="399" x2="894.5" y2="405" stroke="#b4c4d6" stroke-width="1"/>
<rect x="14" y="39" width="31" height="22" fill="#ececec"/>
<rect x="14" y="39" width="31" height="4.5" fill="#d2d2d2"/>
<linearGradient id="lgr" x1="0" y1="0" x2="0" y2="1"><stop offset="0" stop-color="#f4505a"/><stop offset="1" stop-color="#c01c26"/></linearGradient><linearGradient id="lgb" x1="0" y1="0" x2="0" y2="1"><stop offset="0" stop-color="#40b4ec"/><stop offset="1" stop-color="#1a78c0"/></linearGradient>
<rect x="18" y="47" width="9.5" height="9.5" rx="1.5" fill="url(#lgr)" stroke="#8a1018" stroke-width="0.8"/>
<rect x="31.3" y="47" width="9.5" height="9.5" rx="1.5" fill="url(#lgb)" stroke="#105090" stroke-width="0.8"/>
<rect x="45" y="40" width="245" height="12.5" fill="#3a3f47"/>
<text x="45" y="51.3" font-family="Liberation Sans" font-size="11.8" fill="#1a1ad0" textLength="105" lengthAdjust="spacingAndGlyphs">ential_Moving_Average</text>
<text x="154" y="51.3" font-family="Liberation Sans" font-size="11.8" fill="#cc2626" textLength="134" lengthAdjust="spacingAndGlyphs">Exponential_Moving_Average</text>
<text x="904.8" y="61.2" font-family="Liberation Sans" font-size="11.6" fill="#f4f4f4" stroke="#f4f4f4" stroke-width="0.2" textLength="32.5" lengthAdjust="spacingAndGlyphs">0.9200</text>
<text x="904.8" y="110.6" font-family="Liberation Sans" font-size="11.6" fill="#f4f4f4" stroke="#f4f4f4" stroke-width="0.2" textLength="32.5" lengthAdjust="spacingAndGlyphs">0.9100</text>
<text x="904.8" y="160.0" font-family="Liberation Sans" font-size="11.6" fill="#f4f4f4" stroke="#f4f4f4" stroke-width="0.2" textLength="32.5" lengthAdjust="spacingAndGlyphs">0.9000</text>
<text x="904.8" y="209.4" font-family="Liberation Sans" font-size="11.6" fill="#f4f4f4" stroke="#f4f4f4" stroke-width="0.2" textLength="32.5" lengthAdjust="spacingAndGlyphs">0.8900</text>
<text x="905.5" y="288.7" font-family="Liberation Sans" font-size="11.6" fill="#f4f4f4" stroke="#f4f4f4" stroke-width="0.2" textLength="33.5" lengthAdjust="spacingAndGlyphs">+0.000</text>
<text x="904.8" y="352.0" font-family="Liberation Sans" font-size="11.6" fill="#f4f4f4" stroke="#f4f4f4" stroke-width="0.2" textLength="12.5" lengthAdjust="spacingAndGlyphs">60</text>
<text x="904.8" y="379.3" font-family="Liberation Sans" font-size="11.6" fill="#f4f4f4" stroke="#f4f4f4" stroke-width="0.2" textLength="12.5" lengthAdjust="spacingAndGlyphs">40</text>
<rect x="897" y="221" width="48" height="21" fill="#ffffff"/>
<text x="905.5" y="235.5" font-family="Liberation Sans" font-size="11" fill="#4c5262" textLength="32.5" lengthAdjust="spacingAndGlyphs">0.8843</text>
<text x="33.5" y="424" font-family="Liberation Sans" font-size="11" fill="#f4f4f4" stroke="#f4f4f4" stroke-width="0.25" text-anchor="middle">2</text>
<text x="58.5" y="424" font-family="Liberation Sans" font-size="11" fill="#f4f4f4" stroke="#f4f4f4" stroke-width="0.25" text-anchor="middle">3</text>
<text x="82.5" y="424" font-family="Liberation Sans" font-size="11" fill="#f4f4f4" stroke="#f4f4f4" stroke-width="0.25" text-anchor="middle">4</text>
<text x="107.5" y="424" font-family="Liberation Sans" font-size="11" fill="#f4f4f4" stroke="#f4f4f4" stroke-width="0.25" text-anchor="middle">5</text>
<text x="132.5" y="424" font-family="Liberation Sans" font-size="11" fill="#f4f4f4" stroke="#f4f4f4" stroke-width="0.25" text-anchor="middle">6</text>
<text x="156.5" y="424" font-family="Liberation Sans" font-size="11" fill="#f4f4f4" stroke="#f4f4f4" stroke-width="0.25" text-anchor="middle">9</text>
<text x="181.5" y="424" font-family="Liberation Sans" font-size="11" fill="#f4f4f4" stroke="#f4f4f4" stroke-width="0.25" text-anchor="middle">10</text>
<text x="205.5" y="424" font-family="Liberation Sans" font-size="11" fill="#f4f4f4" stroke="#f4f4f4" stroke-width="0.25" text-anchor="middle">11</text>
<text x="230.5" y="424" font-family="Liberation Sans" font-size="11" fill="#f4f4f4" stroke="#f4f4f4" stroke-width="0.25" text-anchor="middle">12</text>
<text x="254.5" y="424" font-family="Liberation Sans" font-size="11" fill="#f4f4f4" stroke="#f4f4f4" stroke-width="0.25" text-anchor="middle">13</text>
<text x="279.5" y="424" font-family="Liberation Sans" font-size="11" fill="#f4f4f4" stroke="#f4f4f4" stroke-width="0.25" text-anchor="middle">16</text>
<text x="304.5" y="424" font-family="Liberation Sans" font-size="11" fill="#f4f4f4" stroke="#f4f4f4" stroke-width="0.25" text-anchor="middle">17</text>
<text x="328.5" y="424" font-family="Liberation Sans" font-size="11" fill="#f4f4f4" stroke="#f4f4f4" stroke-width="0.25" text-anchor="middle">18</text>
<text x="353.5" y="424" font-family="Liberation Sans" font-size="11" fill="#f4f4f4" stroke="#f4f4f4" stroke-width="0.25" text-anchor="middle">19</text>
<text x="377.5" y="424" font-family="Liberation Sans" font-size="11" fill="#f4f4f4" stroke="#f4f4f4" stroke-width="0.25" text-anchor="middle">20</text>
<text x="402.5" y="424" font-family="Liberation Sans" font-size="11" fill="#f4f4f4" stroke="#f4f4f4" stroke-width="0.25" text-anchor="middle">23</text>
<text x="427.5" y="424" font-family="Liberation Sans" font-size="11" fill="#f4f4f4" stroke="#f4f4f4" stroke-width="0.25" text-anchor="middle">24</text>
<text x="451.5" y="424" font-family="Liberation Sans" font-size="11" fill="#f4f4f4" stroke="#f4f4f4" stroke-width="0.25" text-anchor="middle">25</text>
<text x="476.5" y="424" font-family="Liberation Sans" font-size="11" fill="#f4f4f4" stroke="#f4f4f4" stroke-width="0.25" text-anchor="middle">26</text>
<text x="500.5" y="424" font-family="Liberation Sans" font-size="11" fill="#f4f4f4" stroke="#f4f4f4" stroke-width="0.25" text-anchor="middle">27</text>
<text x="525.5" y="424" font-family="Liberation Sans" font-size="11" fill="#f4f4f4" stroke="#f4f4f4" stroke-width="0.25" text-anchor="middle">30</text>
<text x="549.5" y="424" font-family="Liberation Sans" font-size="11" fill="#f4f4f4" stroke="#f4f4f4" stroke-width="0.25" text-anchor="middle">1</text>
<text x="574.5" y="424" font-family="Liberation Sans" font-size="11" fill="#f4f4f4" stroke="#f4f4f4" stroke-width="0.25" text-anchor="middle">2</text>
<text x="599.5" y="424" font-family="Liberation Sans" font-size="11" fill="#f4f4f4" stroke="#f4f4f4" stroke-width="0.25" text-anchor="middle">3</text>
<text x="623.5" y="424" font-family="Liberation Sans" font-size="11" fill="#f4f4f4" stroke="#f4f4f4" stroke-width="0.25" text-anchor="middle">4</text>
<text x="648.5" y="424" font-family="Liberation Sans" font-size="11" fill="#f4f4f4" stroke="#f4f4f4" stroke-width="0.25" text-anchor="middle">7</text>
<text x="672.5" y="424" font-family="Liberation Sans" font-size="11" fill="#f4f4f4" stroke="#f4f4f4" stroke-width="0.25" text-anchor="middle">8</text>
<text x="697.5" y="424" font-family="Liberation Sans" font-size="11" fill="#f4f4f4" stroke="#f4f4f4" stroke-width="0.25" text-anchor="middle">9</text>
<text x="722.5" y="424" font-family="Liberation Sans" font-size="11" fill="#f4f4f4" stroke="#f4f4f4" stroke-width="0.25" text-anchor="middle">10</text>
<text x="746.5" y="424" font-family="Liberation Sans" font-size="11" fill="#f4f4f4" stroke="#f4f4f4" stroke-width="0.25" text-anchor="middle">11</text>
<text x="771.5" y="424" font-family="Liberation Sans" font-size="11" fill="#f4f4f4" stroke="#f4f4f4" stroke-width="0.25" text-anchor="middle">14</text>
<text x="795.5" y="424" font-family="Liberation Sans" font-size="11" fill="#f4f4f4" stroke="#f4f4f4" stroke-width="0.25" text-anchor="middle">15</text>
<text x="820.5" y="424" font-family="Liberation Sans" font-size="11" fill="#f4f4f4" stroke="#f4f4f4" stroke-width="0.25" text-anchor="middle">16</text>
<text x="844.5" y="424" font-family="Liberation Sans" font-size="11" fill="#f4f4f4" stroke="#f4f4f4" stroke-width="0.25" text-anchor="middle">17</text>
<text x="869.5" y="424" font-family="Liberation Sans" font-size="11" fill="#f4f4f4" stroke="#f4f4f4" stroke-width="0.25" text-anchor="middle">18</text>
<text x="894.5" y="424" font-family="Liberation Sans" font-size="11" fill="#f4f4f4" stroke="#f4f4f4" stroke-width="0.25" text-anchor="middle">19</text>
<path d="M14.5,378.5 H74.5 L76.5,380.5 V395.5 L74.5,397.5 H14.5 Z" fill="#5e6e82" stroke="#c8dce0" stroke-width="1"/>
<line x1="15.0" y1="378" x2="15.0" y2="405" stroke="#d0e8e4" stroke-width="2"/>
<text x="22.5" y="392" font-family="Liberation Sans" font-size="11" fill="#ffffff">Нов 2020</text>
<path d="M549.5,378.5 H607.5 L609.5,380.5 V395.5 L607.5,397.5 H549.5 Z" fill="#5e6e82" stroke="#c8dce0" stroke-width="1"/>
<line x1="550.0" y1="378" x2="550.0" y2="405" stroke="#d0e8e4" stroke-width="2"/>
<text x="557.5" y="392" font-family="Liberation Sans" font-size="11" fill="#ffffff">Дек 2020</text>
</svg></body></html>
